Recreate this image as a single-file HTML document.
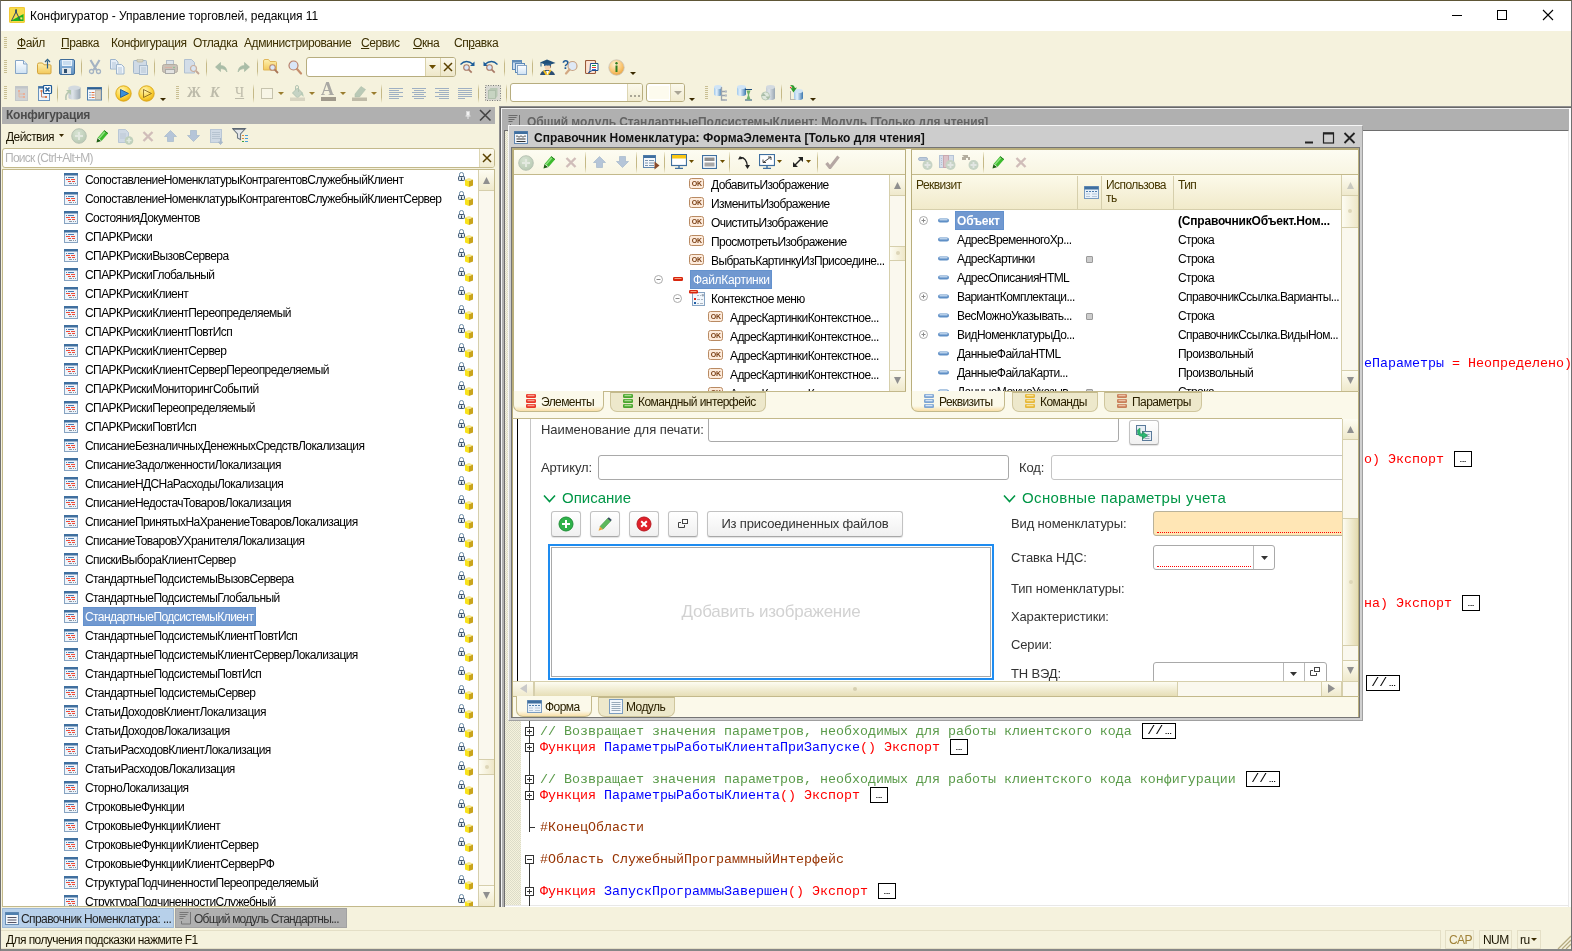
<!DOCTYPE html><html lang="ru"><head><meta charset="utf-8"><title>Конфигуратор</title><style>
*{box-sizing:border-box;margin:0;padding:0}
html,body{width:1572px;height:951px;overflow:hidden;background:#f5f2dd}
body{will-change:transform}
body{position:relative;font-family:"Liberation Sans",sans-serif;font-size:12px;color:#000;letter-spacing:-0.58px}
.a{position:absolute}
.t{position:absolute;white-space:pre;line-height:14px;height:14px}
.ui{font-size:12px;letter-spacing:-0.58px}
.mono{font-family:"Liberation Mono",monospace;font-size:13.33px;letter-spacing:0;line-height:16px;height:16px;position:absolute;white-space:pre}
.kw{color:#f00}.id{color:#00f}.cm{color:#5a9b4a}.pp{color:#963200}
.fold{position:absolute;border:1px solid #000;background:#fff;height:16px;font-family:"Liberation Mono",monospace;font-size:13.33px;letter-spacing:0;line-height:14px;text-align:center;color:#000;white-space:pre;overflow:hidden}
.dots{font-family:"Liberation Sans",sans-serif;font-size:8px;letter-spacing:0;font-weight:bold}
.frm{font-size:13px;letter-spacing:-0.12px;color:#333;position:absolute;white-space:pre;line-height:16px}
</style></head><body><div class="a" style="left:0px;top:0px;width:1572px;height:951px;background:#f5f2dd;border:1px solid #707070;border-top-color:#5e5636;border-bottom:2px solid #868686"></div><div class="a" style="left:1px;top:1px;width:1570px;height:30px;background:#fff"></div><div class="t" style="left:30px;top:9px;font-size:12px;letter-spacing:-0.04px;color:#000">Конфигуратор - Управление торговлей, редакция 11</div><svg class="a" style="left:1440px;top:1px" width="130" height="30" viewBox="0 0 130 30"><g stroke="#000" stroke-width="1" fill="none" shape-rendering="crispEdges"><path d="M12 14.5h10"/><rect x="57.5" y="9.5" width="9" height="9"/></g><path d="M103 9l10 10M113 9l-10 10" stroke="#000" stroke-width="1.1" fill="none"/></svg><svg class="a" style="left:9px;top:7px" width="16" height="16" viewBox="0 0 17 17"><rect x="0" y="0" width="17" height="17" rx="1.5" fill="#f7dc4a"/><rect x="0.5" y="0.5" width="16" height="16" rx="1.5" fill="none" stroke="#f0c838"/><path d="M2 14.5L15.5 7.5V15H2z" fill="#1db11d"/><rect x="12" y="11" width="2.2" height="2.2" fill="#f7e27a"/><path d="M7.5 2v3M7.5 5L2.5 15M7.5 5l4.5 9.5" stroke="#4a5560" stroke-width="1.1" fill="none"/><rect x="6.5" y="3" width="2" height="3.5" fill="#39536b"/></svg><div class="a" style="left:4px;top:37px;width:3px;height:12px;background:repeating-linear-gradient(#c9bf93 0 1px,transparent 1px 2px)"></div><div class="t" style="left:17px;top:36px;color:#3c2f00;letter-spacing:-0.42px"><u>Ф</u>айл</div><div class="t" style="left:61px;top:36px;color:#3c2f00;letter-spacing:-0.42px"><u>П</u>равка</div><div class="t" style="left:111px;top:36px;color:#3c2f00;letter-spacing:-0.42px">Конфигурация</div><div class="t" style="left:193px;top:36px;color:#3c2f00;letter-spacing:-0.42px">Отладка</div><div class="t" style="left:244px;top:36px;color:#3c2f00;letter-spacing:-0.42px">Администрирование</div><div class="t" style="left:361px;top:36px;color:#3c2f00;letter-spacing:-0.42px"><u>С</u>ервис</div><div class="t" style="left:413px;top:36px;color:#3c2f00;letter-spacing:-0.42px"><u>О</u>кна</div><div class="t" style="left:454px;top:36px;color:#3c2f00;letter-spacing:-0.42px">Сп<u>р</u>авка</div><div class="a" style="left:4px;top:60px;width:3px;height:13px;background:repeating-linear-gradient(#c9bf93 0 1px,transparent 1px 2px)"></div><div class="a" style="left:4px;top:86px;width:3px;height:13px;background:repeating-linear-gradient(#c9bf93 0 1px,transparent 1px 2px)"></div><svg width="0" height="0" style="position:absolute"><defs>
<linearGradient id="gpage" x1="0" y1="0" x2="0" y2="1"><stop offset="0" stop-color="#ffffff"/><stop offset="1" stop-color="#cfe2f3"/></linearGradient>
<linearGradient id="gfold" x1="0" y1="0" x2="0" y2="1"><stop offset="0" stop-color="#fdf0b0"/><stop offset="1" stop-color="#f3c95a"/></linearGradient>
<linearGradient id="gsave" x1="0" y1="0" x2="0" y2="1"><stop offset="0" stop-color="#9dc1e4"/><stop offset="1" stop-color="#5f8fbf"/></linearGradient>
<radialGradient id="gplay" cx="0.4" cy="0.3" r="0.8"><stop offset="0" stop-color="#fff6b8"/><stop offset="0.6" stop-color="#fbd136"/><stop offset="1" stop-color="#e0a210"/></radialGradient>
<radialGradient id="ginfo" cx="0.4" cy="0.3" r="0.8"><stop offset="0" stop-color="#fff1d2"/><stop offset="0.6" stop-color="#f9c46f"/><stop offset="1" stop-color="#e59a2d"/></radialGradient>
<linearGradient id="gcyl" x1="0" y1="0" x2="1" y2="0"><stop offset="0" stop-color="#9fc8ec"/><stop offset="0.35" stop-color="#e4f1fb"/><stop offset="1" stop-color="#3c78b0"/></linearGradient>
<linearGradient id="gcylg" x1="0" y1="0" x2="1" y2="0"><stop offset="0" stop-color="#c5cdd4"/><stop offset="0.35" stop-color="#dde3e8"/><stop offset="1" stop-color="#9aa7b2"/></linearGradient>
<radialGradient id="ggrn" cx="0.4" cy="0.3" r="0.8"><stop offset="0" stop-color="#d7e3d2"/><stop offset="1" stop-color="#b5c7b0"/></radialGradient>
<linearGradient id="gbtn" x1="0" y1="0" x2="0" y2="1"><stop offset="0" stop-color="#fdfcf3"/><stop offset="1" stop-color="#efe9cd"/></linearGradient>
<linearGradient id="ghdr" x1="0" y1="0" x2="0" y2="1"><stop offset="0" stop-color="#fcfaea"/><stop offset="1" stop-color="#ede5c2"/></linearGradient>
</defs></svg><svg class="a" style="left:14px;top:59px" width="15" height="16" viewBox="0 0 15 16" ><path d="M1.5 1.5h8l3.5 3.5v9.5h-11.5z" fill="url(#gpage)" stroke="#86a5c6"/><path d="M9.5 1.5v3.5h3.5" fill="#e8f1fa" stroke="#86a5c6"/></svg><svg class="a" style="left:36px;top:58px" width="17" height="17" viewBox="0 0 17 17" ><path d="M1.5 6.5q0-1.500 1.500-1.500h3.500l1.500 1.800h6q1 0 1 1v7q0 1-1 1h-11q-1.500 0-1.500-1.500z" fill="url(#gfold)" stroke="#d3a43c"/><path d="M11.500 10.500v-8" stroke="#2f6286" stroke-width="1.200"/><path d="M9 4l2.500-2.700 2.500 2.700" fill="none" stroke="#2f6286" stroke-width="1.200"/></svg><svg class="a" style="left:59px;top:59px" width="16" height="16" viewBox="0 0 16 16" ><rect x="0.5" y="0.5" width="15" height="15" rx="1.500" fill="url(#gsave)" stroke="#3f6c99"/><rect x="3" y="1" width="10" height="6" fill="#e9f2fb"/><path d="M4 3h8M4 5h8" stroke="#a9c7e4"/><rect x="3" y="9" width="9" height="6" fill="#dfe5ea"/><rect x="5" y="10" width="3" height="4" fill="#2f4f70"/></svg><div class="a" style="left:81px;top:58px;width:1px;height:19px;background:linear-gradient(#f5f2dd,#c5b987 30%,#c5b987 70%,#f5f2dd)"></div><svg class="a" style="left:88px;top:59px" width="14" height="16" viewBox="0 0 14 16" ><path d="M2.5 1l6 10M11.500 1l-6 10" stroke="#a4b3c3" stroke-width="2.200" fill="none"/><circle cx="3.500" cy="12.500" r="2" fill="none" stroke="#a4b3c3" stroke-width="1.300"/><circle cx="10.500" cy="12.500" r="2" fill="none" stroke="#a4b3c3" stroke-width="1.300"/></svg><svg class="a" style="left:109px;top:59px" width="17" height="16" viewBox="0 0 17 16" ><path d="M1.5 0.500h5l2.500 2.500v7h-7.500z" fill="#e6eef7" stroke="#9db4cc"/><path d="M3 4h4M3 6h4M3 8h4" stroke="#b4c6d8"/><path d="M7.500 5.500h5l2.500 2.500v7h-7.500z" fill="#eef4fa" stroke="#9db4cc"/><path d="M9 9h4M9 11h4M9 13h4" stroke="#b4c6d8"/></svg><svg class="a" style="left:133px;top:59px" width="16" height="16" viewBox="0 0 16 16" ><rect x="0.5" y="1.500" width="13" height="13" rx="1" fill="#cfdae6" stroke="#a5b8cb"/><rect x="4" y="0" width="6" height="3" rx="1" fill="#d9d6c3" stroke="#b5b19a" stroke-width="0.700"/><rect x="6.500" y="6.500" width="8" height="9" fill="#dbe5ef" stroke="#a5b8cb"/><path d="M8 9h5M8 11h5M8 13h5" stroke="#b6c5d4"/></svg><div class="a" style="left:154px;top:58px;width:1px;height:19px;background:linear-gradient(#f5f2dd,#c5b987 30%,#c5b987 70%,#f5f2dd)"></div><svg class="a" style="left:162px;top:60px" width="16" height="15" viewBox="0 0 16 15" ><rect x="4.500" y="0.500" width="7" height="5" fill="#dde4ea" stroke="#b5bfc8"/><rect x="0.500" y="4.500" width="15" height="8" rx="2" fill="#c9c1b6" stroke="#b3aca2"/><rect x="3.500" y="9.500" width="9" height="4" fill="#e2e2e0" stroke="#a9a9a6"/><path d="M3 7.500h7" stroke="#d9b0a5"/><circle cx="12" cy="7.500" r="0.800" fill="#7fbf8a"/></svg><svg class="a" style="left:184px;top:59px" width="17" height="16" viewBox="0 0 17 16" ><path d="M0.500 0.500h7l3 3v10.500h-10z" fill="#d3dde8" stroke="#b1c0d0"/><circle cx="9.500" cy="9.500" r="3" fill="#d9e5f2" stroke="#c9ae9c" stroke-width="1.200"/><path d="M12 12l3 3" stroke="#c3a594" stroke-width="1.800"/></svg><div class="a" style="left:206px;top:58px;width:1px;height:19px;background:linear-gradient(#f5f2dd,#c5b987 30%,#c5b987 70%,#f5f2dd)"></div><svg class="a" style="left:215px;top:62px" width="14" height="11" viewBox="0 0 14 11" ><path d="M0.500 5L5.500 0.500v3q6 0 6.500 6.500q-1.500-3.500-6.500-3.500v3z" fill="#a9bda7" stroke="#a1b5a0" stroke-width="0.600"/></svg><svg class="a" style="left:236px;top:62px" width="14" height="11" viewBox="0 0 14 11" ><path d="M13.500 5L8.500 0.500v3q-6 0-6.500 6.500q1.500-3.500 6.500-3.500v3z" fill="#a9bda7" stroke="#a1b5a0" stroke-width="0.600"/></svg><div class="a" style="left:257px;top:58px;width:1px;height:19px;background:linear-gradient(#f5f2dd,#c5b987 30%,#c5b987 70%,#f5f2dd)"></div><svg class="a" style="left:263px;top:58px" width="17" height="17" viewBox="0 0 17 17" ><path d="M0.500 3q0-1.500 1.500-1.500h3.500l1.500 2h5.500q1 0 1 1v7.500h-13z" fill="url(#gfold)" stroke="#e0b65a"/><circle cx="9.500" cy="9.500" r="2.800" fill="#dbe8f8" stroke="#b9876f" stroke-width="1.100"/><path d="M11.700 11.700l3.300 3.300" stroke="#a97557" stroke-width="1.800"/></svg><svg class="a" style="left:287px;top:60px" width="16" height="16" viewBox="0 0 16 16" ><circle cx="6.500" cy="5.500" r="4.500" fill="#d9e6f8" stroke="#b9806a" stroke-width="1.200"/><path d="M10 9l4 4.500" stroke="#c58e6d" stroke-width="2.200" stroke-linecap="round"/></svg><div class="a" style="left:306px;top:57px;width:150px;height:20px;background:#fff;border:1px solid #b7ad7f;border-radius:3px"></div><div class="a" style="left:425px;top:58px;width:30px;height:18px;background:linear-gradient(#fbf9ec,#eee7c9);border-left:1px solid #d9d1a9;border-radius:0 2px 2px 0"></div><div class="a" style="left:440px;top:58px;width:1px;height:18px;background:#d9d1a9"></div><svg class="a" style="left:429px;top:65px" width="7" height="4" viewBox="0 0 7 4" ><path d="M0 0h7L3.5 4z" fill="#6b4e00"/></svg><svg class="a" style="left:443px;top:62px" width="10" height="10" viewBox="0 0 10 10" ><path d="M1 1l8 8M9 1l-8 8" stroke="#5a4100" stroke-width="1.500"/></svg><svg class="a" style="left:459px;top:59px" width="17" height="16" viewBox="0 0 17 16" ><path d="M1.500 5.500q5.500-6 13 0" fill="none" stroke="#1c5d99" stroke-width="1.300"/><path d="M15.500 2.500v4.500h-4.500z" fill="#1c5d99"/><circle cx="7.500" cy="8.500" r="2.800" fill="#d9e6f8" stroke="#a97a66" stroke-width="1.100"/><path d="M9.700 10.700l3 3" stroke="#a97a66" stroke-width="1.700"/></svg><svg class="a" style="left:482px;top:59px" width="17" height="16" viewBox="0 0 17 16" ><path d="M15.500 5.500q-5.500-6-13 0" fill="none" stroke="#1c5d99" stroke-width="1.300"/><path d="M1.500 2.500v4.500h4.500z" fill="#1c5d99"/><circle cx="7.500" cy="8.500" r="2.800" fill="#d9e6f8" stroke="#a97a66" stroke-width="1.100"/><path d="M9.700 10.700l3 3" stroke="#a97a66" stroke-width="1.700"/></svg><div class="a" style="left:504px;top:58px;width:1px;height:19px;background:linear-gradient(#f5f2dd,#c5b987 30%,#c5b987 70%,#f5f2dd)"></div><svg class="a" style="left:512px;top:60px" width="15" height="15" viewBox="0 0 15 15" ><rect x="0.500" y="0.500" width="9" height="9" fill="#c9dcef" stroke="#5f8bb8"/><rect x="0.500" y="0.500" width="9" height="2" fill="#5f8bb8"/><rect x="3.500" y="3.500" width="9" height="9" fill="#e4eef8" stroke="#5f8bb8"/><rect x="5.500" y="5.500" width="9" height="9" fill="url(#gpage)" stroke="#86a5c6"/></svg><div class="a" style="left:532px;top:58px;width:1px;height:19px;background:linear-gradient(#f5f2dd,#c5b987 30%,#c5b987 70%,#f5f2dd)"></div><svg class="a" style="left:539px;top:59px" width="17" height="17" viewBox="0 0 17 17" ><path d="M1 16q1-4 5-5h4q5 1 6 5z" fill="#2d4f73"/><path d="M5.500 11l2.500 3 3-3.500 1.500 1-3 4.500h-3l-2.500-4z" fill="#f4c224"/><path d="M7 12h3l-1.500 4z" fill="#fff"/><ellipse cx="8.500" cy="7.500" rx="3" ry="3.700" fill="#f3d2b3"/><path d="M9.500 4.500q3 0 2.500 5q-1-1-1-3z" fill="#8a5a36"/><path d="M1 3.500L8 0.500l8.500 3.500L8.500 6.500z" fill="#1f4e79"/><path d="M5 4.500h7v2.500q-3.500-1.500-7 0z" fill="#2a5d8c"/><path d="M2 3.500v4" stroke="#2a5d8c"/></svg><svg class="a" style="left:562px;top:59px" width="17" height="17" viewBox="0 0 17 17" ><text x="0" y="9.500" font-family="Liberation Sans" font-weight="bold" font-size="12" fill="#1f5a96">?</text><circle cx="10.500" cy="7" r="4.500" fill="#dfe9f6" stroke="#c7a283" stroke-width="1.200"/><path d="M7.500 10.500l-3.500 4" stroke="#d3a882" stroke-width="2.200" stroke-linecap="round"/></svg><svg class="a" style="left:585px;top:60px" width="14" height="15" viewBox="0 0 14 15" ><rect x="0.500" y="0.500" width="10" height="13" rx="1" fill="#fde3d3" stroke="#9a5a3a" stroke-width="1.100"/><path d="M5.500 3.500h7.500v7h-6l-3.500 2.500 1.500-2.500z" fill="#fff" stroke="#1f4e8c"/><path d="M7 5.500h4" stroke="#1f9a3a"/><path d="M7 7.500h4" stroke="#e03a2a"/><path d="M7 9.500h4" stroke="#3a6ad0"/></svg><svg class="a" style="left:608px;top:59px" width="17" height="17" viewBox="0 0 17 17" ><circle cx="8.500" cy="8.500" r="7.700" fill="url(#ginfo)" stroke="#c9c3b8" stroke-width="0.800"/><rect x="7.500" y="6.500" width="2" height="6.500" fill="#2e7d1e"/><circle cx="8.500" cy="4.300" r="1.200" fill="#2e7d1e"/></svg><svg class="a" style="left:630px;top:72px" width="6" height="3" viewBox="0 0 6 3" ><path d="M0 0h6L3.0 3z" fill="#3a2a00"/></svg><svg class="a" style="left:15px;top:86px" width="13" height="15" viewBox="0 0 13 15" ><rect x="0.500" y="0.500" width="12" height="14" fill="#d0d3d4" stroke="#c3c7c9"/><rect x="0.500" y="0.500" width="12" height="2" fill="#c1c5c8"/><path d="M4 5v6h5M4 8h5" stroke="#e2b9a4" fill="none"/><rect x="8" y="7" width="2" height="2" fill="#e8b09a"/><rect x="8" y="10" width="2" height="2" fill="#e8b09a"/><rect x="3" y="4" width="2" height="2" fill="#e8b09a"/></svg><svg class="a" style="left:38px;top:85px" width="15" height="16" viewBox="0 0 15 16" ><rect x="0.500" y="1.500" width="11" height="14" fill="#eef4fb" stroke="#6a93bd"/><rect x="0.500" y="1.500" width="11" height="2" fill="#3f6f9f"/><path d="M3.500 6v6h5" stroke="#c9826a" fill="none"/><rect x="7" y="11" width="2" height="2" fill="#e07a50"/><rect x="2.500" y="5" width="2" height="2" fill="#e07a50"/><rect x="5.500" y="0.500" width="8" height="8" rx="1" fill="#fff" stroke="#1f5a96" stroke-width="1.200"/><path d="M7.500 2.500l4 4M11.500 2.500l-4 4" stroke="#1f5a96" stroke-width="1.600"/></svg><div class="a" style="left:57px;top:84px;width:1px;height:19px;background:linear-gradient(#f5f2dd,#c5b987 30%,#c5b987 70%,#f5f2dd)"></div><svg class="a" style="left:64px;top:85px" width="17" height="16" viewBox="0 0 17 16" ><path d="M4.500 2.500v10q0 2 6 2t6-2v-10" fill="url(#gcylg)"/><ellipse cx="10.500" cy="2.700" rx="6" ry="2.200" fill="#d3dae0"/><path d="M2 15q-1-6 3-8" fill="none" stroke="#b5c4b0" stroke-width="1.500"/><path d="M2 5h5v5z" fill="#b5c9ae"/></svg><svg class="a" style="left:87px;top:87px" width="16" height="14" viewBox="0 0 16 14" ><rect x="0.500" y="0.500" width="14" height="12.500" fill="#f4f8fc" stroke="#4f7fae"/><rect x="0.500" y="0.500" width="14" height="2" fill="#2f5f8f"/><rect x="8.500" y="3" width="5.500" height="9.500" fill="#d3cec2" stroke="#a9a49a" stroke-width="0.600"/><path d="M4.500 5.500h3M4.500 8h3M4.500 10.500h3" stroke="#e0703a" stroke-width="1.200"/><path d="M2.500 5.500h1M2.500 8h1M2.500 10.500h1" stroke="#2f5f8f" stroke-width="1.200"/></svg><div class="a" style="left:108px;top:84px;width:1px;height:19px;background:linear-gradient(#f5f2dd,#c5b987 30%,#c5b987 70%,#f5f2dd)"></div><svg class="a" style="left:115px;top:85px" width="17" height="17" viewBox="0 0 17 17" ><circle cx="8.500" cy="8.500" r="7.700" fill="url(#gplay)" stroke="#d9a514" stroke-width="0.900"/><path d="M5.500 4.500v8l8-4z" fill="#3a8fd9" stroke="#1f5a96" stroke-width="0.900"/></svg><svg class="a" style="left:138px;top:85px" width="17" height="17" viewBox="0 0 17 17" ><circle cx="8.500" cy="8.500" r="7.700" fill="url(#gplay)" stroke="#d9a514" stroke-width="0.900"/><path d="M5.500 4.500v8l8-4z" fill="none" stroke="#8a6a20" stroke-width="0.900"/></svg><svg class="a" style="left:160px;top:98px" width="6" height="3" viewBox="0 0 6 3" ><path d="M0 0h6L3.0 3z" fill="#3a2a00"/></svg><div class="a" style="left:176px;top:86px;width:3px;height:13px;background:repeating-linear-gradient(#c9bf93 0 1px,transparent 1px 2px)"></div><div class="t" style="left:187px;top:85px;font-family:&quot;Liberation Serif&quot;,serif;font-weight:bold;font-size:14px;letter-spacing:0;color:#bdbbaa;line-height:16px;height:16px">Ж</div><div class="t" style="left:210px;top:85px;font-family:&quot;Liberation Serif&quot;,serif;font-weight:bold;font-style:italic;font-size:14px;letter-spacing:0;color:#bdbbaa;line-height:16px;height:16px">К</div><div class="t" style="left:235px;top:85px;font-family:&quot;Liberation Serif&quot;,serif;font-size:14px;letter-spacing:0;color:#bdbbaa;line-height:16px;height:16px;text-decoration:underline">Ч</div><div class="a" style="left:253px;top:84px;width:1px;height:19px;background:linear-gradient(#f5f2dd,#c5b987 30%,#c5b987 70%,#f5f2dd)"></div><div class="a" style="left:261px;top:88px;width:12px;height:11px;border:1px solid #c6c3ad;background:#f7f5e6"></div><svg class="a" style="left:278px;top:92px" width="6" height="3" viewBox="0 0 6 3" ><path d="M0 0h6L3.0 3z" fill="#9a7d2e"/></svg><svg class="a" style="left:290px;top:85px" width="16" height="16" viewBox="0 0 16 16" ><path d="M2.500 8l5-5 5 5-5 5z" fill="#c5d3c4" stroke="#b3c4b2"/><path d="M5.500 5v-3q0-1.500 1.500-1.500t1.500 1.500v5" fill="none" stroke="#b3c4b2"/><path d="M11 7q3 1 2.500 5q-1.500-2-2.500-2z" fill="#b8cbb7"/><rect x="0" y="12.500" width="15" height="3.500" fill="#d7d4c1"/></svg><svg class="a" style="left:309px;top:92px" width="6" height="3" viewBox="0 0 6 3" ><path d="M0 0h6L3.0 3z" fill="#9a7d2e"/></svg><div class="t" style="left:321px;top:80px;font-family:&quot;Liberation Serif&quot;,serif;font-weight:bold;font-size:18px;letter-spacing:0;color:#a9a8a3;line-height:18px;height:18px">A</div><div class="a" style="left:321px;top:97px;width:15px;height:4px;background:#a09a8c"></div><svg class="a" style="left:340px;top:92px" width="6" height="3" viewBox="0 0 6 3" ><path d="M0 0h6L3.0 3z" fill="#9a7d2e"/></svg><svg class="a" style="left:352px;top:85px" width="16" height="16" viewBox="0 0 16 16" ><path d="M3 9l6-7.500 4.500 3-6 7.500h-4.500z" fill="#b9c9b6" stroke="#aebfab" stroke-width="0.600"/><rect x="0" y="12.500" width="15" height="3.500" fill="#bfbba8"/></svg><svg class="a" style="left:371px;top:92px" width="6" height="3" viewBox="0 0 6 3" ><path d="M0 0h6L3.0 3z" fill="#9a7d2e"/></svg><div class="a" style="left:381px;top:84px;width:1px;height:19px;background:linear-gradient(#f5f2dd,#c5b987 30%,#c5b987 70%,#f5f2dd)"></div><div class="a" style="left:389px;top:88px;width:14px;height:1px;background:#9fb0c3"></div><div class="a" style="left:389px;top:90px;width:10px;height:1px;background:#9fb0c3"></div><div class="a" style="left:389px;top:92px;width:14px;height:1px;background:#9fb0c3"></div><div class="a" style="left:389px;top:94px;width:10px;height:1px;background:#9fb0c3"></div><div class="a" style="left:389px;top:96px;width:14px;height:1px;background:#9fb0c3"></div><div class="a" style="left:389px;top:98px;width:10px;height:1px;background:#9fb0c3"></div><div class="a" style="left:412px;top:88px;width:14px;height:1px;background:#9fb0c3"></div><div class="a" style="left:414px;top:90px;width:10px;height:1px;background:#9fb0c3"></div><div class="a" style="left:412px;top:92px;width:14px;height:1px;background:#9fb0c3"></div><div class="a" style="left:414px;top:94px;width:10px;height:1px;background:#9fb0c3"></div><div class="a" style="left:412px;top:96px;width:14px;height:1px;background:#9fb0c3"></div><div class="a" style="left:414px;top:98px;width:10px;height:1px;background:#9fb0c3"></div><div class="a" style="left:435px;top:88px;width:14px;height:1px;background:#9fb0c3"></div><div class="a" style="left:439px;top:90px;width:10px;height:1px;background:#9fb0c3"></div><div class="a" style="left:435px;top:92px;width:14px;height:1px;background:#9fb0c3"></div><div class="a" style="left:439px;top:94px;width:10px;height:1px;background:#9fb0c3"></div><div class="a" style="left:435px;top:96px;width:14px;height:1px;background:#9fb0c3"></div><div class="a" style="left:439px;top:98px;width:10px;height:1px;background:#9fb0c3"></div><div class="a" style="left:458px;top:88px;width:14px;height:1px;background:#9fb0c3"></div><div class="a" style="left:458px;top:90px;width:14px;height:1px;background:#9fb0c3"></div><div class="a" style="left:458px;top:92px;width:14px;height:1px;background:#9fb0c3"></div><div class="a" style="left:458px;top:94px;width:14px;height:1px;background:#9fb0c3"></div><div class="a" style="left:458px;top:96px;width:14px;height:1px;background:#9fb0c3"></div><div class="a" style="left:458px;top:98px;width:7px;height:1px;background:#9fb0c3"></div><div class="a" style="left:478px;top:84px;width:1px;height:19px;background:linear-gradient(#f5f2dd,#c5b987 30%,#c5b987 70%,#f5f2dd)"></div><svg class="a" style="left:485px;top:85px" width="17" height="16" viewBox="0 0 17 16" ><rect x="0.500" y="0.500" width="15" height="15" fill="#d9d9d2" stroke="#7a7a7a" stroke-dasharray="1 1.500" stroke-width="1"/><path d="M3.500 5.500l2-2.500h7v8l-2 2.500h-7z" fill="#b9c8b4"/><rect x="3.500" y="5.500" width="7" height="8" fill="#c7d4c2" stroke="#a8b9a4" stroke-width="0.700"/></svg><div class="a" style="left:506px;top:84px;width:1px;height:19px;background:linear-gradient(#f5f2dd,#c5b987 30%,#c5b987 70%,#f5f2dd)"></div><div class="a" style="left:510px;top:83px;width:133px;height:19px;background:#fff;border:1px solid #b7ad7f;border-radius:3px"></div><div class="a" style="left:627px;top:84px;width:15px;height:17px;background:linear-gradient(#fbf9ec,#f1ebd0);border-left:1px solid #ddd6b3;border-radius:0 2px 2px 0"></div><div class="a" style="left:630px;top:95px;width:2px;height:2px;background:#a9a595"></div><div class="a" style="left:634px;top:95px;width:2px;height:2px;background:#a9a595"></div><div class="a" style="left:638px;top:95px;width:2px;height:2px;background:#a9a595"></div><div class="a" style="left:646px;top:83px;width:39px;height:19px;background:#fff;border:1px solid #b7ad7f;border-radius:3px"></div><div class="a" style="left:649px;top:86px;width:20px;height:13px;background:#fdfbee"></div><div class="a" style="left:670px;top:84px;width:14px;height:17px;background:linear-gradient(#fbf9ec,#f1ebd0);border-left:1px solid #ddd6b3;border-radius:0 2px 2px 0"></div><svg class="a" style="left:674px;top:91px" width="8" height="4" viewBox="0 0 8 4" ><path d="M0 0h8L4.0 4z" fill="#aaa595"/></svg><svg class="a" style="left:689px;top:98px" width="6" height="3" viewBox="0 0 6 3" ><path d="M0 0h6L3.0 3z" fill="#3a2a00"/></svg><div class="a" style="left:705px;top:86px;width:3px;height:13px;background:repeating-linear-gradient(#c9bf93 0 1px,transparent 1px 2px)"></div><svg class="a" style="left:714px;top:85px" width="14" height="16" viewBox="0 0 14 16" ><path d="M0 2v7q0 2 4.0 2t4.0-2v-7" fill="url(#gcyl)"/><ellipse cx="4.0" cy="2" rx="4.0" ry="2" fill="#cfe4f6"/><path d="M7.500 2v13h5M7.500 6.500h5M7.500 10.500h5" fill="none" stroke="#9aa3ad" stroke-width="1.300"/><rect x="11" y="5.500" width="2" height="2" fill="#b5bcc4"/><rect x="11" y="9.500" width="2" height="2" fill="#b5bcc4"/><rect x="11" y="14" width="2" height="2" fill="#b5bcc4"/></svg><svg class="a" style="left:737px;top:85px" width="16" height="16" viewBox="0 0 16 16" ><path d="M0 2v7q0 2 4.5 2t4.5-2v-7" fill="url(#gcyl)"/><ellipse cx="4.5" cy="2" rx="4.5" ry="2" fill="#cfe4f6"/><path d="M8 4.500h7M8 15h7" stroke="#1f4e79" stroke-width="1.200"/><path d="M9.500 5.500h4l-1.500 4.500 1.500 4.500h-4l1.500-4.500z" fill="#6fb26a"/></svg><svg class="a" style="left:760px;top:85px" width="16" height="16" viewBox="0 0 16 16" ><path d="M6 2v11q0 2 4.5 2t4.5-2v-11" fill="url(#gcylg)"/><ellipse cx="10.5" cy="2" rx="4.5" ry="2" fill="#d3dae0"/><circle cx="5.500" cy="11" r="4" fill="#dfe8dd" stroke="#b9c9b6"/><path d="M1 11l2.500-3 2.500 3zM5.500 11.500l2.500 3 2.500-3z" fill="#a9bda7"/></svg><div class="a" style="left:781px;top:84px;width:1px;height:19px;background:linear-gradient(#f5f2dd,#c5b987 30%,#c5b987 70%,#f5f2dd)"></div><svg class="a" style="left:789px;top:84px" width="15" height="17" viewBox="0 0 15 17" ><path d="M1.500 7.500v8h5" fill="none" stroke="#7a7a7a" stroke-dasharray="1 1"/><path d="M5 7v7q0 2 4.5 2t4.5-2v-7" fill="url(#gcyl)"/><ellipse cx="9.5" cy="7" rx="4.5" ry="2" fill="#cfe4f6"/><path d="M1 1.500q4-1.500 5 2.500l2-0.500-3.500 5-3-4.500 2 0.300q-0.500-2-2.500-2.800z" fill="#2d9a2d"/><circle cx="1.700" cy="3.500" r="0.800" fill="#f33"/></svg><svg class="a" style="left:810px;top:98px" width="6" height="3" viewBox="0 0 6 3" ><path d="M0 0h6L3.0 3z" fill="#3a2a00"/></svg><div class="a" style="left:2px;top:107px;width:493px;height:17px;background:#b0b0b0"></div><div class="t" style="left:6px;top:108px;font-weight:bold;color:#4b4b4b;letter-spacing:-0.25px">Конфигурация</div><svg class="a" style="left:464px;top:110px" width="8" height="10" viewBox="0 0 8 10" ><rect x="2.500" y="1.500" width="3" height="4" fill="#f3f3f3" stroke="#d9d9d9" stroke-width="0.700"/><path d="M1.500 6h5M4 6v3" stroke="#e9e9e9"/></svg><svg class="a" style="left:479px;top:109px" width="13" height="13" viewBox="0 0 13 13" ><path d="M1 1l10.500 10.500M11.500 1l-10.500 10.500" stroke="#444" stroke-width="1.600"/></svg><div class="t" style="left:6px;top:130px;color:#1a1400">Действия</div><svg class="a" style="left:59px;top:134px" width="5" height="3" viewBox="0 0 5 3" ><path d="M0 0h5L2.5 3z" fill="#3a2a00"/></svg><svg class="a" style="left:71px;top:128px" width="16" height="16" viewBox="0 0 16 16" ><circle cx="8" cy="8" r="7.300" fill="url(#ggrn)" stroke="#b4bfb1" stroke-width="0.900"/><path d="M8 4v8M4 8h8" stroke="#e3e9e0" stroke-width="2"/></svg><svg class="a" style="left:95px;top:129px" width="14" height="14" viewBox="0 0 14 14" ><path d="M2.500 9l6.500-7.500 4 3-6.500 7.500z" fill="#3dbb2d"/><path d="M4 9.500l6.500-7.500" stroke="#8fe07f" stroke-width="1.400"/><path d="M9 1.500l4 3" stroke="#1a7a12" stroke-width="1"/><path d="M2.500 9l4 3-5 1.500z" fill="#1d5e14"/><path d="M2.500 9l4 3" stroke="#eaf6e4" stroke-width="0.800"/></svg><svg class="a" style="left:118px;top:129px" width="16" height="16" viewBox="0 0 16 16" ><path d="M0.500 0.500h7l3 3v10h-10z" fill="#cfd9e4" stroke="#b9c7d5"/><path d="M2 5h6M2 7h6M2 9h6" stroke="#bcc8d5"/><circle cx="11" cy="11.500" r="4.300" fill="#bfd0bb"/><path d="M11 9v5M8.500 11.500h5" stroke="#e3ecdf" stroke-width="1.500"/></svg><svg class="a" style="left:142px;top:131px" width="12" height="11" viewBox="0 0 12 11" ><path d="M1.500 1l9 9M10.500 1l-9 9" stroke="#d0bdb9" stroke-width="2.400"/></svg><svg class="a" style="left:164px;top:130px" width="13" height="12" viewBox="0 0 13 12" ><path d="M6.500 0.500l6 6h-3v5h-6v-5h-3z" fill="#b5c5d8" stroke="#a5b7cb" stroke-width="0.700"/></svg><svg class="a" style="left:187px;top:130px" width="13" height="12" viewBox="0 0 13 12" ><path d="M6.500 11.500l6-6h-3v-5h-6v5h-3z" fill="#b5c5d8" stroke="#a5b7cb" stroke-width="0.700"/></svg><svg class="a" style="left:210px;top:129px" width="14" height="16" viewBox="0 0 14 16" ><rect x="0.500" y="0.500" width="11" height="13" fill="#cfd9e4" stroke="#b9c7d5"/><path d="M2 3.500h8M2 5.500h8M2 7.500h8M2 9.500h8" stroke="#b7c4d1"/><path d="M10.500 9v6M8.500 13l2 2.500 2-2.500z" stroke="#a9b9c9" fill="#a9b9c9"/></svg><svg class="a" style="left:232px;top:128px" width="17" height="18" viewBox="0 0 17 18" ><path d="M0.500 0.500h13l-5 5.500v5.500l-3-1.500v-4z" fill="#e4e7ea" stroke="#6f7a85" stroke-width="1.100"/><path d="M1 1h12" stroke="#555f69" stroke-width="1.400"/><path d="M10 7.500h2M10 10.500h2M10 13.500h2" stroke="#e08a3a" stroke-width="1.200"/><path d="M13 7.500h3M13 10.500h3M13 13.500h3" stroke="#4a9fd8" stroke-width="1.200"/><path d="M10 13.500h2" stroke="#3aa03a" stroke-width="1.200"/></svg><div class="a" style="left:2px;top:148px;width:493px;height:20px;background:#fff;border:1px solid #c3b98b;border-radius:3px"></div><div class="a" style="left:479px;top:149px;width:15px;height:18px;background:linear-gradient(#fcfaee,#f1ebd0);border-left:1px solid #ddd6b3;border-radius:0 2px 2px 0"></div><div class="t" style="left:5px;top:151px;color:#b4b4b4;letter-spacing:-0.75px">Поиск (Ctrl+Alt+M)</div><svg class="a" style="left:482px;top:153px" width="10" height="10" viewBox="0 0 10 10" ><path d="M1 1l8 8M9 1l-8 8" stroke="#5a4100" stroke-width="1.500"/></svg><div class="a" style="left:2px;top:169px;width:493px;height:738px;background:#fff;border:1px solid #c3b98b"></div><div class="a" style="left:3px;top:170px;width:476px;height:736px;overflow:hidden"><svg class="a" style="left:61px;top:3px" width="14" height="13" viewBox="0 0 14 13"><rect x="0.500" y="0.500" width="13" height="12" fill="#eef4fa" stroke="#86a3c2"/><rect x="0" y="0" width="14" height="2.500" fill="#3f6f9f"/><path d="M2 4.500h1M4 4.500h6" stroke="#4a7ab0"/><path d="M2 6.500h4M7 6.500h4" stroke="#ee4a38"/><path d="M4 8.500h3M8 8.500h3" stroke="#ee4a38"/><path d="M5 10.500h3M9 10.500h1M11 10.500h1" stroke="#8a97a5"/></svg><div class="t" style="left:82px;top:3px">СопоставлениеНоменклатурыКонтрагентовСлужебныйКлиент</div><svg class="a" style="left:455px;top:2px" width="16" height="16" viewBox="0 0 16 16"><path d="M1.500 4.500v-2.200q0-1.800 2-1.800t2 1.800v2.200" fill="#fff" stroke="#6a8aa5" stroke-width="1"/><rect x="0.500" y="4.500" width="6" height="4" rx="0.800" fill="#dde7f0" stroke="#3f5670" stroke-width="1"/><path d="M3.500 5.500v2.500" stroke="#33465c" stroke-width="1"/><path d="M7 7.500l4 1.500v6l-4-1.500z" fill="#f8e21c"/><path d="M11 9l4-1.500v6l-4 1.500z" fill="#c9a41c"/><path d="M7 7.500l4-1.500 4 1.500-4 1.500z" fill="#f6e88c"/></svg><svg class="a" style="left:61px;top:22px" width="14" height="13" viewBox="0 0 14 13"><rect x="0.500" y="0.500" width="13" height="12" fill="#eef4fa" stroke="#86a3c2"/><rect x="0" y="0" width="14" height="2.500" fill="#3f6f9f"/><path d="M2 4.500h1M4 4.500h6" stroke="#4a7ab0"/><path d="M2 6.500h4M7 6.500h4" stroke="#ee4a38"/><path d="M4 8.500h3M8 8.500h3" stroke="#ee4a38"/><path d="M5 10.500h3M9 10.500h1M11 10.500h1" stroke="#8a97a5"/></svg><div class="t" style="left:82px;top:22px">СопоставлениеНоменклатурыКонтрагентовСлужебныйКлиентСервер</div><svg class="a" style="left:455px;top:21px" width="16" height="16" viewBox="0 0 16 16"><path d="M1.500 4.500v-2.200q0-1.800 2-1.800t2 1.800v2.200" fill="#fff" stroke="#6a8aa5" stroke-width="1"/><rect x="0.500" y="4.500" width="6" height="4" rx="0.800" fill="#dde7f0" stroke="#3f5670" stroke-width="1"/><path d="M3.500 5.500v2.500" stroke="#33465c" stroke-width="1"/><path d="M7 7.500l4 1.500v6l-4-1.500z" fill="#f8e21c"/><path d="M11 9l4-1.500v6l-4 1.500z" fill="#c9a41c"/><path d="M7 7.500l4-1.500 4 1.500-4 1.500z" fill="#f6e88c"/></svg><svg class="a" style="left:61px;top:41px" width="14" height="13" viewBox="0 0 14 13"><rect x="0.500" y="0.500" width="13" height="12" fill="#eef4fa" stroke="#86a3c2"/><rect x="0" y="0" width="14" height="2.500" fill="#3f6f9f"/><path d="M2 4.500h1M4 4.500h6" stroke="#4a7ab0"/><path d="M2 6.500h4M7 6.500h4" stroke="#ee4a38"/><path d="M4 8.500h3M8 8.500h3" stroke="#ee4a38"/><path d="M5 10.500h3M9 10.500h1M11 10.500h1" stroke="#8a97a5"/></svg><div class="t" style="left:82px;top:41px">СостоянияДокументов</div><svg class="a" style="left:455px;top:40px" width="16" height="16" viewBox="0 0 16 16"><path d="M1.500 4.500v-2.200q0-1.800 2-1.800t2 1.800v2.200" fill="#fff" stroke="#6a8aa5" stroke-width="1"/><rect x="0.500" y="4.500" width="6" height="4" rx="0.800" fill="#dde7f0" stroke="#3f5670" stroke-width="1"/><path d="M3.500 5.500v2.500" stroke="#33465c" stroke-width="1"/><path d="M7 7.500l4 1.500v6l-4-1.500z" fill="#f8e21c"/><path d="M11 9l4-1.500v6l-4 1.500z" fill="#c9a41c"/><path d="M7 7.500l4-1.500 4 1.500-4 1.500z" fill="#f6e88c"/></svg><svg class="a" style="left:61px;top:60px" width="14" height="13" viewBox="0 0 14 13"><rect x="0.500" y="0.500" width="13" height="12" fill="#eef4fa" stroke="#86a3c2"/><rect x="0" y="0" width="14" height="2.500" fill="#3f6f9f"/><path d="M2 4.500h1M4 4.500h6" stroke="#4a7ab0"/><path d="M2 6.500h4M7 6.500h4" stroke="#ee4a38"/><path d="M4 8.500h3M8 8.500h3" stroke="#ee4a38"/><path d="M5 10.500h3M9 10.500h1M11 10.500h1" stroke="#8a97a5"/></svg><div class="t" style="left:82px;top:60px">СПАРКРиски</div><svg class="a" style="left:455px;top:59px" width="16" height="16" viewBox="0 0 16 16"><path d="M1.500 4.500v-2.200q0-1.800 2-1.800t2 1.800v2.200" fill="#fff" stroke="#6a8aa5" stroke-width="1"/><rect x="0.500" y="4.500" width="6" height="4" rx="0.800" fill="#dde7f0" stroke="#3f5670" stroke-width="1"/><path d="M3.500 5.500v2.500" stroke="#33465c" stroke-width="1"/><path d="M7 7.500l4 1.500v6l-4-1.500z" fill="#f8e21c"/><path d="M11 9l4-1.500v6l-4 1.500z" fill="#c9a41c"/><path d="M7 7.500l4-1.500 4 1.500-4 1.500z" fill="#f6e88c"/></svg><svg class="a" style="left:61px;top:79px" width="14" height="13" viewBox="0 0 14 13"><rect x="0.500" y="0.500" width="13" height="12" fill="#eef4fa" stroke="#86a3c2"/><rect x="0" y="0" width="14" height="2.500" fill="#3f6f9f"/><path d="M2 4.500h1M4 4.500h6" stroke="#4a7ab0"/><path d="M2 6.500h4M7 6.500h4" stroke="#ee4a38"/><path d="M4 8.500h3M8 8.500h3" stroke="#ee4a38"/><path d="M5 10.500h3M9 10.500h1M11 10.500h1" stroke="#8a97a5"/></svg><div class="t" style="left:82px;top:79px">СПАРКРискиВызовСервера</div><svg class="a" style="left:455px;top:78px" width="16" height="16" viewBox="0 0 16 16"><path d="M1.500 4.500v-2.200q0-1.800 2-1.800t2 1.800v2.200" fill="#fff" stroke="#6a8aa5" stroke-width="1"/><rect x="0.500" y="4.500" width="6" height="4" rx="0.800" fill="#dde7f0" stroke="#3f5670" stroke-width="1"/><path d="M3.500 5.500v2.500" stroke="#33465c" stroke-width="1"/><path d="M7 7.500l4 1.500v6l-4-1.500z" fill="#f8e21c"/><path d="M11 9l4-1.500v6l-4 1.500z" fill="#c9a41c"/><path d="M7 7.500l4-1.500 4 1.500-4 1.500z" fill="#f6e88c"/></svg><svg class="a" style="left:61px;top:98px" width="14" height="13" viewBox="0 0 14 13"><rect x="0.500" y="0.500" width="13" height="12" fill="#eef4fa" stroke="#86a3c2"/><rect x="0" y="0" width="14" height="2.500" fill="#3f6f9f"/><path d="M2 4.500h1M4 4.500h6" stroke="#4a7ab0"/><path d="M2 6.500h4M7 6.500h4" stroke="#ee4a38"/><path d="M4 8.500h3M8 8.500h3" stroke="#ee4a38"/><path d="M5 10.500h3M9 10.500h1M11 10.500h1" stroke="#8a97a5"/></svg><div class="t" style="left:82px;top:98px">СПАРКРискиГлобальный</div><svg class="a" style="left:455px;top:97px" width="16" height="16" viewBox="0 0 16 16"><path d="M1.500 4.500v-2.200q0-1.800 2-1.800t2 1.800v2.200" fill="#fff" stroke="#6a8aa5" stroke-width="1"/><rect x="0.500" y="4.500" width="6" height="4" rx="0.800" fill="#dde7f0" stroke="#3f5670" stroke-width="1"/><path d="M3.500 5.500v2.500" stroke="#33465c" stroke-width="1"/><path d="M7 7.500l4 1.500v6l-4-1.500z" fill="#f8e21c"/><path d="M11 9l4-1.500v6l-4 1.500z" fill="#c9a41c"/><path d="M7 7.500l4-1.500 4 1.500-4 1.500z" fill="#f6e88c"/></svg><svg class="a" style="left:61px;top:117px" width="14" height="13" viewBox="0 0 14 13"><rect x="0.500" y="0.500" width="13" height="12" fill="#eef4fa" stroke="#86a3c2"/><rect x="0" y="0" width="14" height="2.500" fill="#3f6f9f"/><path d="M2 4.500h1M4 4.500h6" stroke="#4a7ab0"/><path d="M2 6.500h4M7 6.500h4" stroke="#ee4a38"/><path d="M4 8.500h3M8 8.500h3" stroke="#ee4a38"/><path d="M5 10.500h3M9 10.500h1M11 10.500h1" stroke="#8a97a5"/></svg><div class="t" style="left:82px;top:117px">СПАРКРискиКлиент</div><svg class="a" style="left:455px;top:116px" width="16" height="16" viewBox="0 0 16 16"><path d="M1.500 4.500v-2.200q0-1.800 2-1.800t2 1.800v2.200" fill="#fff" stroke="#6a8aa5" stroke-width="1"/><rect x="0.500" y="4.500" width="6" height="4" rx="0.800" fill="#dde7f0" stroke="#3f5670" stroke-width="1"/><path d="M3.500 5.500v2.500" stroke="#33465c" stroke-width="1"/><path d="M7 7.500l4 1.500v6l-4-1.500z" fill="#f8e21c"/><path d="M11 9l4-1.500v6l-4 1.500z" fill="#c9a41c"/><path d="M7 7.500l4-1.500 4 1.500-4 1.500z" fill="#f6e88c"/></svg><svg class="a" style="left:61px;top:136px" width="14" height="13" viewBox="0 0 14 13"><rect x="0.500" y="0.500" width="13" height="12" fill="#eef4fa" stroke="#86a3c2"/><rect x="0" y="0" width="14" height="2.500" fill="#3f6f9f"/><path d="M2 4.500h1M4 4.500h6" stroke="#4a7ab0"/><path d="M2 6.500h4M7 6.500h4" stroke="#ee4a38"/><path d="M4 8.500h3M8 8.500h3" stroke="#ee4a38"/><path d="M5 10.500h3M9 10.500h1M11 10.500h1" stroke="#8a97a5"/></svg><div class="t" style="left:82px;top:136px">СПАРКРискиКлиентПереопределяемый</div><svg class="a" style="left:455px;top:135px" width="16" height="16" viewBox="0 0 16 16"><path d="M1.500 4.500v-2.200q0-1.800 2-1.800t2 1.800v2.200" fill="#fff" stroke="#6a8aa5" stroke-width="1"/><rect x="0.500" y="4.500" width="6" height="4" rx="0.800" fill="#dde7f0" stroke="#3f5670" stroke-width="1"/><path d="M3.500 5.500v2.500" stroke="#33465c" stroke-width="1"/><path d="M7 7.500l4 1.500v6l-4-1.500z" fill="#f8e21c"/><path d="M11 9l4-1.500v6l-4 1.500z" fill="#c9a41c"/><path d="M7 7.500l4-1.500 4 1.500-4 1.500z" fill="#f6e88c"/></svg><svg class="a" style="left:61px;top:155px" width="14" height="13" viewBox="0 0 14 13"><rect x="0.500" y="0.500" width="13" height="12" fill="#eef4fa" stroke="#86a3c2"/><rect x="0" y="0" width="14" height="2.500" fill="#3f6f9f"/><path d="M2 4.500h1M4 4.500h6" stroke="#4a7ab0"/><path d="M2 6.500h4M7 6.500h4" stroke="#ee4a38"/><path d="M4 8.500h3M8 8.500h3" stroke="#ee4a38"/><path d="M5 10.500h3M9 10.500h1M11 10.500h1" stroke="#8a97a5"/></svg><div class="t" style="left:82px;top:155px">СПАРКРискиКлиентПовтИсп</div><svg class="a" style="left:455px;top:154px" width="16" height="16" viewBox="0 0 16 16"><path d="M1.500 4.500v-2.200q0-1.800 2-1.800t2 1.800v2.200" fill="#fff" stroke="#6a8aa5" stroke-width="1"/><rect x="0.500" y="4.500" width="6" height="4" rx="0.800" fill="#dde7f0" stroke="#3f5670" stroke-width="1"/><path d="M3.500 5.500v2.500" stroke="#33465c" stroke-width="1"/><path d="M7 7.500l4 1.500v6l-4-1.500z" fill="#f8e21c"/><path d="M11 9l4-1.500v6l-4 1.500z" fill="#c9a41c"/><path d="M7 7.500l4-1.500 4 1.500-4 1.500z" fill="#f6e88c"/></svg><svg class="a" style="left:61px;top:174px" width="14" height="13" viewBox="0 0 14 13"><rect x="0.500" y="0.500" width="13" height="12" fill="#eef4fa" stroke="#86a3c2"/><rect x="0" y="0" width="14" height="2.500" fill="#3f6f9f"/><path d="M2 4.500h1M4 4.500h6" stroke="#4a7ab0"/><path d="M2 6.500h4M7 6.500h4" stroke="#ee4a38"/><path d="M4 8.500h3M8 8.500h3" stroke="#ee4a38"/><path d="M5 10.500h3M9 10.500h1M11 10.500h1" stroke="#8a97a5"/></svg><div class="t" style="left:82px;top:174px">СПАРКРискиКлиентСервер</div><svg class="a" style="left:455px;top:173px" width="16" height="16" viewBox="0 0 16 16"><path d="M1.500 4.500v-2.200q0-1.800 2-1.800t2 1.800v2.200" fill="#fff" stroke="#6a8aa5" stroke-width="1"/><rect x="0.500" y="4.500" width="6" height="4" rx="0.800" fill="#dde7f0" stroke="#3f5670" stroke-width="1"/><path d="M3.500 5.500v2.500" stroke="#33465c" stroke-width="1"/><path d="M7 7.500l4 1.500v6l-4-1.500z" fill="#f8e21c"/><path d="M11 9l4-1.500v6l-4 1.500z" fill="#c9a41c"/><path d="M7 7.500l4-1.500 4 1.500-4 1.500z" fill="#f6e88c"/></svg><svg class="a" style="left:61px;top:193px" width="14" height="13" viewBox="0 0 14 13"><rect x="0.500" y="0.500" width="13" height="12" fill="#eef4fa" stroke="#86a3c2"/><rect x="0" y="0" width="14" height="2.500" fill="#3f6f9f"/><path d="M2 4.500h1M4 4.500h6" stroke="#4a7ab0"/><path d="M2 6.500h4M7 6.500h4" stroke="#ee4a38"/><path d="M4 8.500h3M8 8.500h3" stroke="#ee4a38"/><path d="M5 10.500h3M9 10.500h1M11 10.500h1" stroke="#8a97a5"/></svg><div class="t" style="left:82px;top:193px">СПАРКРискиКлиентСерверПереопределяемый</div><svg class="a" style="left:455px;top:192px" width="16" height="16" viewBox="0 0 16 16"><path d="M1.500 4.500v-2.200q0-1.800 2-1.800t2 1.800v2.200" fill="#fff" stroke="#6a8aa5" stroke-width="1"/><rect x="0.500" y="4.500" width="6" height="4" rx="0.800" fill="#dde7f0" stroke="#3f5670" stroke-width="1"/><path d="M3.500 5.500v2.500" stroke="#33465c" stroke-width="1"/><path d="M7 7.500l4 1.500v6l-4-1.500z" fill="#f8e21c"/><path d="M11 9l4-1.500v6l-4 1.500z" fill="#c9a41c"/><path d="M7 7.500l4-1.500 4 1.500-4 1.500z" fill="#f6e88c"/></svg><svg class="a" style="left:61px;top:212px" width="14" height="13" viewBox="0 0 14 13"><rect x="0.500" y="0.500" width="13" height="12" fill="#eef4fa" stroke="#86a3c2"/><rect x="0" y="0" width="14" height="2.500" fill="#3f6f9f"/><path d="M2 4.500h1M4 4.500h6" stroke="#4a7ab0"/><path d="M2 6.500h4M7 6.500h4" stroke="#ee4a38"/><path d="M4 8.500h3M8 8.500h3" stroke="#ee4a38"/><path d="M5 10.500h3M9 10.500h1M11 10.500h1" stroke="#8a97a5"/></svg><div class="t" style="left:82px;top:212px">СПАРКРискиМониторингСобытий</div><svg class="a" style="left:455px;top:211px" width="16" height="16" viewBox="0 0 16 16"><path d="M1.500 4.500v-2.200q0-1.800 2-1.800t2 1.800v2.200" fill="#fff" stroke="#6a8aa5" stroke-width="1"/><rect x="0.500" y="4.500" width="6" height="4" rx="0.800" fill="#dde7f0" stroke="#3f5670" stroke-width="1"/><path d="M3.500 5.500v2.500" stroke="#33465c" stroke-width="1"/><path d="M7 7.500l4 1.500v6l-4-1.500z" fill="#f8e21c"/><path d="M11 9l4-1.500v6l-4 1.500z" fill="#c9a41c"/><path d="M7 7.500l4-1.500 4 1.500-4 1.500z" fill="#f6e88c"/></svg><svg class="a" style="left:61px;top:231px" width="14" height="13" viewBox="0 0 14 13"><rect x="0.500" y="0.500" width="13" height="12" fill="#eef4fa" stroke="#86a3c2"/><rect x="0" y="0" width="14" height="2.500" fill="#3f6f9f"/><path d="M2 4.500h1M4 4.500h6" stroke="#4a7ab0"/><path d="M2 6.500h4M7 6.500h4" stroke="#ee4a38"/><path d="M4 8.500h3M8 8.500h3" stroke="#ee4a38"/><path d="M5 10.500h3M9 10.500h1M11 10.500h1" stroke="#8a97a5"/></svg><div class="t" style="left:82px;top:231px">СПАРКРискиПереопределяемый</div><svg class="a" style="left:455px;top:230px" width="16" height="16" viewBox="0 0 16 16"><path d="M1.500 4.500v-2.200q0-1.800 2-1.800t2 1.800v2.200" fill="#fff" stroke="#6a8aa5" stroke-width="1"/><rect x="0.500" y="4.500" width="6" height="4" rx="0.800" fill="#dde7f0" stroke="#3f5670" stroke-width="1"/><path d="M3.500 5.500v2.500" stroke="#33465c" stroke-width="1"/><path d="M7 7.500l4 1.500v6l-4-1.500z" fill="#f8e21c"/><path d="M11 9l4-1.500v6l-4 1.500z" fill="#c9a41c"/><path d="M7 7.500l4-1.500 4 1.500-4 1.500z" fill="#f6e88c"/></svg><svg class="a" style="left:61px;top:250px" width="14" height="13" viewBox="0 0 14 13"><rect x="0.500" y="0.500" width="13" height="12" fill="#eef4fa" stroke="#86a3c2"/><rect x="0" y="0" width="14" height="2.500" fill="#3f6f9f"/><path d="M2 4.500h1M4 4.500h6" stroke="#4a7ab0"/><path d="M2 6.500h4M7 6.500h4" stroke="#ee4a38"/><path d="M4 8.500h3M8 8.500h3" stroke="#ee4a38"/><path d="M5 10.500h3M9 10.500h1M11 10.500h1" stroke="#8a97a5"/></svg><div class="t" style="left:82px;top:250px">СПАРКРискиПовтИсп</div><svg class="a" style="left:455px;top:249px" width="16" height="16" viewBox="0 0 16 16"><path d="M1.500 4.500v-2.200q0-1.800 2-1.800t2 1.800v2.200" fill="#fff" stroke="#6a8aa5" stroke-width="1"/><rect x="0.500" y="4.500" width="6" height="4" rx="0.800" fill="#dde7f0" stroke="#3f5670" stroke-width="1"/><path d="M3.500 5.500v2.500" stroke="#33465c" stroke-width="1"/><path d="M7 7.500l4 1.500v6l-4-1.500z" fill="#f8e21c"/><path d="M11 9l4-1.500v6l-4 1.500z" fill="#c9a41c"/><path d="M7 7.500l4-1.500 4 1.500-4 1.500z" fill="#f6e88c"/></svg><svg class="a" style="left:61px;top:269px" width="14" height="13" viewBox="0 0 14 13"><rect x="0.500" y="0.500" width="13" height="12" fill="#eef4fa" stroke="#86a3c2"/><rect x="0" y="0" width="14" height="2.500" fill="#3f6f9f"/><path d="M2 4.500h1M4 4.500h6" stroke="#4a7ab0"/><path d="M2 6.500h4M7 6.500h4" stroke="#ee4a38"/><path d="M4 8.500h3M8 8.500h3" stroke="#ee4a38"/><path d="M5 10.500h3M9 10.500h1M11 10.500h1" stroke="#8a97a5"/></svg><div class="t" style="left:82px;top:269px">СписаниеБезналичныхДенежныхСредствЛокализация</div><svg class="a" style="left:455px;top:268px" width="16" height="16" viewBox="0 0 16 16"><path d="M1.500 4.500v-2.200q0-1.800 2-1.800t2 1.800v2.200" fill="#fff" stroke="#6a8aa5" stroke-width="1"/><rect x="0.500" y="4.500" width="6" height="4" rx="0.800" fill="#dde7f0" stroke="#3f5670" stroke-width="1"/><path d="M3.500 5.500v2.500" stroke="#33465c" stroke-width="1"/><path d="M7 7.500l4 1.500v6l-4-1.500z" fill="#f8e21c"/><path d="M11 9l4-1.500v6l-4 1.500z" fill="#c9a41c"/><path d="M7 7.500l4-1.500 4 1.500-4 1.500z" fill="#f6e88c"/></svg><svg class="a" style="left:61px;top:288px" width="14" height="13" viewBox="0 0 14 13"><rect x="0.500" y="0.500" width="13" height="12" fill="#eef4fa" stroke="#86a3c2"/><rect x="0" y="0" width="14" height="2.500" fill="#3f6f9f"/><path d="M2 4.500h1M4 4.500h6" stroke="#4a7ab0"/><path d="M2 6.500h4M7 6.500h4" stroke="#ee4a38"/><path d="M4 8.500h3M8 8.500h3" stroke="#ee4a38"/><path d="M5 10.500h3M9 10.500h1M11 10.500h1" stroke="#8a97a5"/></svg><div class="t" style="left:82px;top:288px">СписаниеЗадолженностиЛокализация</div><svg class="a" style="left:455px;top:287px" width="16" height="16" viewBox="0 0 16 16"><path d="M1.500 4.500v-2.200q0-1.800 2-1.800t2 1.800v2.200" fill="#fff" stroke="#6a8aa5" stroke-width="1"/><rect x="0.500" y="4.500" width="6" height="4" rx="0.800" fill="#dde7f0" stroke="#3f5670" stroke-width="1"/><path d="M3.500 5.500v2.500" stroke="#33465c" stroke-width="1"/><path d="M7 7.500l4 1.500v6l-4-1.500z" fill="#f8e21c"/><path d="M11 9l4-1.500v6l-4 1.500z" fill="#c9a41c"/><path d="M7 7.500l4-1.500 4 1.500-4 1.500z" fill="#f6e88c"/></svg><svg class="a" style="left:61px;top:307px" width="14" height="13" viewBox="0 0 14 13"><rect x="0.500" y="0.500" width="13" height="12" fill="#eef4fa" stroke="#86a3c2"/><rect x="0" y="0" width="14" height="2.500" fill="#3f6f9f"/><path d="M2 4.500h1M4 4.500h6" stroke="#4a7ab0"/><path d="M2 6.500h4M7 6.500h4" stroke="#ee4a38"/><path d="M4 8.500h3M8 8.500h3" stroke="#ee4a38"/><path d="M5 10.500h3M9 10.500h1M11 10.500h1" stroke="#8a97a5"/></svg><div class="t" style="left:82px;top:307px">СписаниеНДСНаРасходыЛокализация</div><svg class="a" style="left:455px;top:306px" width="16" height="16" viewBox="0 0 16 16"><path d="M1.500 4.500v-2.200q0-1.800 2-1.800t2 1.800v2.200" fill="#fff" stroke="#6a8aa5" stroke-width="1"/><rect x="0.500" y="4.500" width="6" height="4" rx="0.800" fill="#dde7f0" stroke="#3f5670" stroke-width="1"/><path d="M3.500 5.500v2.500" stroke="#33465c" stroke-width="1"/><path d="M7 7.500l4 1.500v6l-4-1.500z" fill="#f8e21c"/><path d="M11 9l4-1.500v6l-4 1.500z" fill="#c9a41c"/><path d="M7 7.500l4-1.500 4 1.500-4 1.500z" fill="#f6e88c"/></svg><svg class="a" style="left:61px;top:326px" width="14" height="13" viewBox="0 0 14 13"><rect x="0.500" y="0.500" width="13" height="12" fill="#eef4fa" stroke="#86a3c2"/><rect x="0" y="0" width="14" height="2.500" fill="#3f6f9f"/><path d="M2 4.500h1M4 4.500h6" stroke="#4a7ab0"/><path d="M2 6.500h4M7 6.500h4" stroke="#ee4a38"/><path d="M4 8.500h3M8 8.500h3" stroke="#ee4a38"/><path d="M5 10.500h3M9 10.500h1M11 10.500h1" stroke="#8a97a5"/></svg><div class="t" style="left:82px;top:326px">СписаниеНедостачТоваровЛокализация</div><svg class="a" style="left:455px;top:325px" width="16" height="16" viewBox="0 0 16 16"><path d="M1.500 4.500v-2.200q0-1.800 2-1.800t2 1.800v2.200" fill="#fff" stroke="#6a8aa5" stroke-width="1"/><rect x="0.500" y="4.500" width="6" height="4" rx="0.800" fill="#dde7f0" stroke="#3f5670" stroke-width="1"/><path d="M3.500 5.500v2.500" stroke="#33465c" stroke-width="1"/><path d="M7 7.500l4 1.500v6l-4-1.500z" fill="#f8e21c"/><path d="M11 9l4-1.500v6l-4 1.500z" fill="#c9a41c"/><path d="M7 7.500l4-1.500 4 1.500-4 1.500z" fill="#f6e88c"/></svg><svg class="a" style="left:61px;top:345px" width="14" height="13" viewBox="0 0 14 13"><rect x="0.500" y="0.500" width="13" height="12" fill="#eef4fa" stroke="#86a3c2"/><rect x="0" y="0" width="14" height="2.500" fill="#3f6f9f"/><path d="M2 4.500h1M4 4.500h6" stroke="#4a7ab0"/><path d="M2 6.500h4M7 6.500h4" stroke="#ee4a38"/><path d="M4 8.500h3M8 8.500h3" stroke="#ee4a38"/><path d="M5 10.500h3M9 10.500h1M11 10.500h1" stroke="#8a97a5"/></svg><div class="t" style="left:82px;top:345px">СписаниеПринятыхНаХранениеТоваровЛокализация</div><svg class="a" style="left:455px;top:344px" width="16" height="16" viewBox="0 0 16 16"><path d="M1.500 4.500v-2.200q0-1.800 2-1.800t2 1.800v2.200" fill="#fff" stroke="#6a8aa5" stroke-width="1"/><rect x="0.500" y="4.500" width="6" height="4" rx="0.800" fill="#dde7f0" stroke="#3f5670" stroke-width="1"/><path d="M3.500 5.500v2.500" stroke="#33465c" stroke-width="1"/><path d="M7 7.500l4 1.500v6l-4-1.500z" fill="#f8e21c"/><path d="M11 9l4-1.500v6l-4 1.500z" fill="#c9a41c"/><path d="M7 7.500l4-1.500 4 1.500-4 1.500z" fill="#f6e88c"/></svg><svg class="a" style="left:61px;top:364px" width="14" height="13" viewBox="0 0 14 13"><rect x="0.500" y="0.500" width="13" height="12" fill="#eef4fa" stroke="#86a3c2"/><rect x="0" y="0" width="14" height="2.500" fill="#3f6f9f"/><path d="M2 4.500h1M4 4.500h6" stroke="#4a7ab0"/><path d="M2 6.500h4M7 6.500h4" stroke="#ee4a38"/><path d="M4 8.500h3M8 8.500h3" stroke="#ee4a38"/><path d="M5 10.500h3M9 10.500h1M11 10.500h1" stroke="#8a97a5"/></svg><div class="t" style="left:82px;top:364px">СписаниеТоваровУХранителяЛокализация</div><svg class="a" style="left:455px;top:363px" width="16" height="16" viewBox="0 0 16 16"><path d="M1.500 4.500v-2.200q0-1.800 2-1.800t2 1.800v2.200" fill="#fff" stroke="#6a8aa5" stroke-width="1"/><rect x="0.500" y="4.500" width="6" height="4" rx="0.800" fill="#dde7f0" stroke="#3f5670" stroke-width="1"/><path d="M3.500 5.500v2.500" stroke="#33465c" stroke-width="1"/><path d="M7 7.500l4 1.500v6l-4-1.500z" fill="#f8e21c"/><path d="M11 9l4-1.500v6l-4 1.500z" fill="#c9a41c"/><path d="M7 7.500l4-1.500 4 1.500-4 1.500z" fill="#f6e88c"/></svg><svg class="a" style="left:61px;top:383px" width="14" height="13" viewBox="0 0 14 13"><rect x="0.500" y="0.500" width="13" height="12" fill="#eef4fa" stroke="#86a3c2"/><rect x="0" y="0" width="14" height="2.500" fill="#3f6f9f"/><path d="M2 4.500h1M4 4.500h6" stroke="#4a7ab0"/><path d="M2 6.500h4M7 6.500h4" stroke="#ee4a38"/><path d="M4 8.500h3M8 8.500h3" stroke="#ee4a38"/><path d="M5 10.500h3M9 10.500h1M11 10.500h1" stroke="#8a97a5"/></svg><div class="t" style="left:82px;top:383px">СпискиВыбораКлиентСервер</div><svg class="a" style="left:455px;top:382px" width="16" height="16" viewBox="0 0 16 16"><path d="M1.500 4.500v-2.200q0-1.800 2-1.800t2 1.800v2.200" fill="#fff" stroke="#6a8aa5" stroke-width="1"/><rect x="0.500" y="4.500" width="6" height="4" rx="0.800" fill="#dde7f0" stroke="#3f5670" stroke-width="1"/><path d="M3.500 5.500v2.500" stroke="#33465c" stroke-width="1"/><path d="M7 7.500l4 1.500v6l-4-1.500z" fill="#f8e21c"/><path d="M11 9l4-1.500v6l-4 1.500z" fill="#c9a41c"/><path d="M7 7.500l4-1.500 4 1.500-4 1.500z" fill="#f6e88c"/></svg><svg class="a" style="left:61px;top:402px" width="14" height="13" viewBox="0 0 14 13"><rect x="0.500" y="0.500" width="13" height="12" fill="#eef4fa" stroke="#86a3c2"/><rect x="0" y="0" width="14" height="2.500" fill="#3f6f9f"/><path d="M2 4.500h1M4 4.500h6" stroke="#4a7ab0"/><path d="M2 6.500h4M7 6.500h4" stroke="#ee4a38"/><path d="M4 8.500h3M8 8.500h3" stroke="#ee4a38"/><path d="M5 10.500h3M9 10.500h1M11 10.500h1" stroke="#8a97a5"/></svg><div class="t" style="left:82px;top:402px">СтандартныеПодсистемыВызовСервера</div><svg class="a" style="left:455px;top:401px" width="16" height="16" viewBox="0 0 16 16"><path d="M1.500 4.500v-2.200q0-1.800 2-1.800t2 1.800v2.200" fill="#fff" stroke="#6a8aa5" stroke-width="1"/><rect x="0.500" y="4.500" width="6" height="4" rx="0.800" fill="#dde7f0" stroke="#3f5670" stroke-width="1"/><path d="M3.500 5.500v2.500" stroke="#33465c" stroke-width="1"/><path d="M7 7.500l4 1.500v6l-4-1.500z" fill="#f8e21c"/><path d="M11 9l4-1.500v6l-4 1.500z" fill="#c9a41c"/><path d="M7 7.500l4-1.500 4 1.500-4 1.500z" fill="#f6e88c"/></svg><svg class="a" style="left:61px;top:421px" width="14" height="13" viewBox="0 0 14 13"><rect x="0.500" y="0.500" width="13" height="12" fill="#eef4fa" stroke="#86a3c2"/><rect x="0" y="0" width="14" height="2.500" fill="#3f6f9f"/><path d="M2 4.500h1M4 4.500h6" stroke="#4a7ab0"/><path d="M2 6.500h4M7 6.500h4" stroke="#ee4a38"/><path d="M4 8.500h3M8 8.500h3" stroke="#ee4a38"/><path d="M5 10.500h3M9 10.500h1M11 10.500h1" stroke="#8a97a5"/></svg><div class="t" style="left:82px;top:421px">СтандартныеПодсистемыГлобальный</div><svg class="a" style="left:455px;top:420px" width="16" height="16" viewBox="0 0 16 16"><path d="M1.500 4.500v-2.200q0-1.800 2-1.800t2 1.800v2.200" fill="#fff" stroke="#6a8aa5" stroke-width="1"/><rect x="0.500" y="4.500" width="6" height="4" rx="0.800" fill="#dde7f0" stroke="#3f5670" stroke-width="1"/><path d="M3.500 5.500v2.500" stroke="#33465c" stroke-width="1"/><path d="M7 7.500l4 1.500v6l-4-1.500z" fill="#f8e21c"/><path d="M11 9l4-1.500v6l-4 1.500z" fill="#c9a41c"/><path d="M7 7.500l4-1.500 4 1.500-4 1.500z" fill="#f6e88c"/></svg><svg class="a" style="left:61px;top:440px" width="14" height="13" viewBox="0 0 14 13"><rect x="0.500" y="0.500" width="13" height="12" fill="#eef4fa" stroke="#86a3c2"/><rect x="0" y="0" width="14" height="2.500" fill="#3f6f9f"/><path d="M2 4.500h1M4 4.500h6" stroke="#4a7ab0"/><path d="M2 6.500h4M7 6.500h4" stroke="#ee4a38"/><path d="M4 8.500h3M8 8.500h3" stroke="#ee4a38"/><path d="M5 10.500h3M9 10.500h1M11 10.500h1" stroke="#8a97a5"/></svg><div class="a" style="left:80px;top:437px;width:173px;height:19px;background:#7098d0;border:1px solid #6391cd"></div><div class="t" style="left:82px;top:440px;color:#fff">СтандартныеПодсистемыКлиент</div><svg class="a" style="left:455px;top:439px" width="16" height="16" viewBox="0 0 16 16"><path d="M1.500 4.500v-2.200q0-1.800 2-1.800t2 1.800v2.200" fill="#fff" stroke="#6a8aa5" stroke-width="1"/><rect x="0.500" y="4.500" width="6" height="4" rx="0.800" fill="#dde7f0" stroke="#3f5670" stroke-width="1"/><path d="M3.500 5.500v2.500" stroke="#33465c" stroke-width="1"/><path d="M7 7.500l4 1.500v6l-4-1.500z" fill="#f8e21c"/><path d="M11 9l4-1.500v6l-4 1.500z" fill="#c9a41c"/><path d="M7 7.500l4-1.500 4 1.500-4 1.500z" fill="#f6e88c"/></svg><svg class="a" style="left:61px;top:459px" width="14" height="13" viewBox="0 0 14 13"><rect x="0.500" y="0.500" width="13" height="12" fill="#eef4fa" stroke="#86a3c2"/><rect x="0" y="0" width="14" height="2.500" fill="#3f6f9f"/><path d="M2 4.500h1M4 4.500h6" stroke="#4a7ab0"/><path d="M2 6.500h4M7 6.500h4" stroke="#ee4a38"/><path d="M4 8.500h3M8 8.500h3" stroke="#ee4a38"/><path d="M5 10.500h3M9 10.500h1M11 10.500h1" stroke="#8a97a5"/></svg><div class="t" style="left:82px;top:459px">СтандартныеПодсистемыКлиентПовтИсп</div><svg class="a" style="left:455px;top:458px" width="16" height="16" viewBox="0 0 16 16"><path d="M1.500 4.500v-2.200q0-1.800 2-1.800t2 1.800v2.200" fill="#fff" stroke="#6a8aa5" stroke-width="1"/><rect x="0.500" y="4.500" width="6" height="4" rx="0.800" fill="#dde7f0" stroke="#3f5670" stroke-width="1"/><path d="M3.500 5.500v2.500" stroke="#33465c" stroke-width="1"/><path d="M7 7.500l4 1.500v6l-4-1.500z" fill="#f8e21c"/><path d="M11 9l4-1.500v6l-4 1.500z" fill="#c9a41c"/><path d="M7 7.500l4-1.500 4 1.500-4 1.500z" fill="#f6e88c"/></svg><svg class="a" style="left:61px;top:478px" width="14" height="13" viewBox="0 0 14 13"><rect x="0.500" y="0.500" width="13" height="12" fill="#eef4fa" stroke="#86a3c2"/><rect x="0" y="0" width="14" height="2.500" fill="#3f6f9f"/><path d="M2 4.500h1M4 4.500h6" stroke="#4a7ab0"/><path d="M2 6.500h4M7 6.500h4" stroke="#ee4a38"/><path d="M4 8.500h3M8 8.500h3" stroke="#ee4a38"/><path d="M5 10.500h3M9 10.500h1M11 10.500h1" stroke="#8a97a5"/></svg><div class="t" style="left:82px;top:478px">СтандартныеПодсистемыКлиентСерверЛокализация</div><svg class="a" style="left:455px;top:477px" width="16" height="16" viewBox="0 0 16 16"><path d="M1.500 4.500v-2.200q0-1.800 2-1.800t2 1.800v2.200" fill="#fff" stroke="#6a8aa5" stroke-width="1"/><rect x="0.500" y="4.500" width="6" height="4" rx="0.800" fill="#dde7f0" stroke="#3f5670" stroke-width="1"/><path d="M3.500 5.500v2.500" stroke="#33465c" stroke-width="1"/><path d="M7 7.500l4 1.500v6l-4-1.500z" fill="#f8e21c"/><path d="M11 9l4-1.500v6l-4 1.500z" fill="#c9a41c"/><path d="M7 7.500l4-1.500 4 1.500-4 1.500z" fill="#f6e88c"/></svg><svg class="a" style="left:61px;top:497px" width="14" height="13" viewBox="0 0 14 13"><rect x="0.500" y="0.500" width="13" height="12" fill="#eef4fa" stroke="#86a3c2"/><rect x="0" y="0" width="14" height="2.500" fill="#3f6f9f"/><path d="M2 4.500h1M4 4.500h6" stroke="#4a7ab0"/><path d="M2 6.500h4M7 6.500h4" stroke="#ee4a38"/><path d="M4 8.500h3M8 8.500h3" stroke="#ee4a38"/><path d="M5 10.500h3M9 10.500h1M11 10.500h1" stroke="#8a97a5"/></svg><div class="t" style="left:82px;top:497px">СтандартныеПодсистемыПовтИсп</div><svg class="a" style="left:455px;top:496px" width="16" height="16" viewBox="0 0 16 16"><path d="M1.500 4.500v-2.200q0-1.800 2-1.800t2 1.800v2.200" fill="#fff" stroke="#6a8aa5" stroke-width="1"/><rect x="0.500" y="4.500" width="6" height="4" rx="0.800" fill="#dde7f0" stroke="#3f5670" stroke-width="1"/><path d="M3.500 5.500v2.500" stroke="#33465c" stroke-width="1"/><path d="M7 7.500l4 1.500v6l-4-1.500z" fill="#f8e21c"/><path d="M11 9l4-1.500v6l-4 1.500z" fill="#c9a41c"/><path d="M7 7.500l4-1.500 4 1.500-4 1.500z" fill="#f6e88c"/></svg><svg class="a" style="left:61px;top:516px" width="14" height="13" viewBox="0 0 14 13"><rect x="0.500" y="0.500" width="13" height="12" fill="#eef4fa" stroke="#86a3c2"/><rect x="0" y="0" width="14" height="2.500" fill="#3f6f9f"/><path d="M2 4.500h1M4 4.500h6" stroke="#4a7ab0"/><path d="M2 6.500h4M7 6.500h4" stroke="#ee4a38"/><path d="M4 8.500h3M8 8.500h3" stroke="#ee4a38"/><path d="M5 10.500h3M9 10.500h1M11 10.500h1" stroke="#8a97a5"/></svg><div class="t" style="left:82px;top:516px">СтандартныеПодсистемыСервер</div><svg class="a" style="left:455px;top:515px" width="16" height="16" viewBox="0 0 16 16"><path d="M1.500 4.500v-2.200q0-1.800 2-1.800t2 1.800v2.200" fill="#fff" stroke="#6a8aa5" stroke-width="1"/><rect x="0.500" y="4.500" width="6" height="4" rx="0.800" fill="#dde7f0" stroke="#3f5670" stroke-width="1"/><path d="M3.500 5.500v2.500" stroke="#33465c" stroke-width="1"/><path d="M7 7.500l4 1.500v6l-4-1.500z" fill="#f8e21c"/><path d="M11 9l4-1.500v6l-4 1.500z" fill="#c9a41c"/><path d="M7 7.500l4-1.500 4 1.500-4 1.500z" fill="#f6e88c"/></svg><svg class="a" style="left:61px;top:535px" width="14" height="13" viewBox="0 0 14 13"><rect x="0.500" y="0.500" width="13" height="12" fill="#eef4fa" stroke="#86a3c2"/><rect x="0" y="0" width="14" height="2.500" fill="#3f6f9f"/><path d="M2 4.500h1M4 4.500h6" stroke="#4a7ab0"/><path d="M2 6.500h4M7 6.500h4" stroke="#ee4a38"/><path d="M4 8.500h3M8 8.500h3" stroke="#ee4a38"/><path d="M5 10.500h3M9 10.500h1M11 10.500h1" stroke="#8a97a5"/></svg><div class="t" style="left:82px;top:535px">СтатьиДоходовКлиентЛокализация</div><svg class="a" style="left:455px;top:534px" width="16" height="16" viewBox="0 0 16 16"><path d="M1.500 4.500v-2.200q0-1.800 2-1.800t2 1.800v2.200" fill="#fff" stroke="#6a8aa5" stroke-width="1"/><rect x="0.500" y="4.500" width="6" height="4" rx="0.800" fill="#dde7f0" stroke="#3f5670" stroke-width="1"/><path d="M3.500 5.500v2.500" stroke="#33465c" stroke-width="1"/><path d="M7 7.500l4 1.500v6l-4-1.500z" fill="#f8e21c"/><path d="M11 9l4-1.500v6l-4 1.500z" fill="#c9a41c"/><path d="M7 7.500l4-1.500 4 1.500-4 1.500z" fill="#f6e88c"/></svg><svg class="a" style="left:61px;top:554px" width="14" height="13" viewBox="0 0 14 13"><rect x="0.500" y="0.500" width="13" height="12" fill="#eef4fa" stroke="#86a3c2"/><rect x="0" y="0" width="14" height="2.500" fill="#3f6f9f"/><path d="M2 4.500h1M4 4.500h6" stroke="#4a7ab0"/><path d="M2 6.500h4M7 6.500h4" stroke="#ee4a38"/><path d="M4 8.500h3M8 8.500h3" stroke="#ee4a38"/><path d="M5 10.500h3M9 10.500h1M11 10.500h1" stroke="#8a97a5"/></svg><div class="t" style="left:82px;top:554px">СтатьиДоходовЛокализация</div><svg class="a" style="left:455px;top:553px" width="16" height="16" viewBox="0 0 16 16"><path d="M1.500 4.500v-2.200q0-1.800 2-1.800t2 1.800v2.200" fill="#fff" stroke="#6a8aa5" stroke-width="1"/><rect x="0.500" y="4.500" width="6" height="4" rx="0.800" fill="#dde7f0" stroke="#3f5670" stroke-width="1"/><path d="M3.500 5.500v2.500" stroke="#33465c" stroke-width="1"/><path d="M7 7.500l4 1.500v6l-4-1.500z" fill="#f8e21c"/><path d="M11 9l4-1.500v6l-4 1.500z" fill="#c9a41c"/><path d="M7 7.500l4-1.500 4 1.500-4 1.500z" fill="#f6e88c"/></svg><svg class="a" style="left:61px;top:573px" width="14" height="13" viewBox="0 0 14 13"><rect x="0.500" y="0.500" width="13" height="12" fill="#eef4fa" stroke="#86a3c2"/><rect x="0" y="0" width="14" height="2.500" fill="#3f6f9f"/><path d="M2 4.500h1M4 4.500h6" stroke="#4a7ab0"/><path d="M2 6.500h4M7 6.500h4" stroke="#ee4a38"/><path d="M4 8.500h3M8 8.500h3" stroke="#ee4a38"/><path d="M5 10.500h3M9 10.500h1M11 10.500h1" stroke="#8a97a5"/></svg><div class="t" style="left:82px;top:573px">СтатьиРасходовКлиентЛокализация</div><svg class="a" style="left:455px;top:572px" width="16" height="16" viewBox="0 0 16 16"><path d="M1.500 4.500v-2.200q0-1.800 2-1.800t2 1.800v2.200" fill="#fff" stroke="#6a8aa5" stroke-width="1"/><rect x="0.500" y="4.500" width="6" height="4" rx="0.800" fill="#dde7f0" stroke="#3f5670" stroke-width="1"/><path d="M3.500 5.500v2.500" stroke="#33465c" stroke-width="1"/><path d="M7 7.500l4 1.500v6l-4-1.500z" fill="#f8e21c"/><path d="M11 9l4-1.500v6l-4 1.500z" fill="#c9a41c"/><path d="M7 7.500l4-1.500 4 1.500-4 1.500z" fill="#f6e88c"/></svg><svg class="a" style="left:61px;top:592px" width="14" height="13" viewBox="0 0 14 13"><rect x="0.500" y="0.500" width="13" height="12" fill="#eef4fa" stroke="#86a3c2"/><rect x="0" y="0" width="14" height="2.500" fill="#3f6f9f"/><path d="M2 4.500h1M4 4.500h6" stroke="#4a7ab0"/><path d="M2 6.500h4M7 6.500h4" stroke="#ee4a38"/><path d="M4 8.500h3M8 8.500h3" stroke="#ee4a38"/><path d="M5 10.500h3M9 10.500h1M11 10.500h1" stroke="#8a97a5"/></svg><div class="t" style="left:82px;top:592px">СтатьиРасходовЛокализация</div><svg class="a" style="left:455px;top:591px" width="16" height="16" viewBox="0 0 16 16"><path d="M1.500 4.500v-2.200q0-1.800 2-1.800t2 1.800v2.200" fill="#fff" stroke="#6a8aa5" stroke-width="1"/><rect x="0.500" y="4.500" width="6" height="4" rx="0.800" fill="#dde7f0" stroke="#3f5670" stroke-width="1"/><path d="M3.500 5.500v2.500" stroke="#33465c" stroke-width="1"/><path d="M7 7.500l4 1.500v6l-4-1.500z" fill="#f8e21c"/><path d="M11 9l4-1.500v6l-4 1.500z" fill="#c9a41c"/><path d="M7 7.500l4-1.500 4 1.500-4 1.500z" fill="#f6e88c"/></svg><svg class="a" style="left:61px;top:611px" width="14" height="13" viewBox="0 0 14 13"><rect x="0.500" y="0.500" width="13" height="12" fill="#eef4fa" stroke="#86a3c2"/><rect x="0" y="0" width="14" height="2.500" fill="#3f6f9f"/><path d="M2 4.500h1M4 4.500h6" stroke="#4a7ab0"/><path d="M2 6.500h4M7 6.500h4" stroke="#ee4a38"/><path d="M4 8.500h3M8 8.500h3" stroke="#ee4a38"/><path d="M5 10.500h3M9 10.500h1M11 10.500h1" stroke="#8a97a5"/></svg><div class="t" style="left:82px;top:611px">СторноЛокализация</div><svg class="a" style="left:455px;top:610px" width="16" height="16" viewBox="0 0 16 16"><path d="M1.500 4.500v-2.200q0-1.800 2-1.800t2 1.800v2.200" fill="#fff" stroke="#6a8aa5" stroke-width="1"/><rect x="0.500" y="4.500" width="6" height="4" rx="0.800" fill="#dde7f0" stroke="#3f5670" stroke-width="1"/><path d="M3.500 5.500v2.500" stroke="#33465c" stroke-width="1"/><path d="M7 7.500l4 1.500v6l-4-1.500z" fill="#f8e21c"/><path d="M11 9l4-1.500v6l-4 1.500z" fill="#c9a41c"/><path d="M7 7.500l4-1.500 4 1.500-4 1.500z" fill="#f6e88c"/></svg><svg class="a" style="left:61px;top:630px" width="14" height="13" viewBox="0 0 14 13"><rect x="0.500" y="0.500" width="13" height="12" fill="#eef4fa" stroke="#86a3c2"/><rect x="0" y="0" width="14" height="2.500" fill="#3f6f9f"/><path d="M2 4.500h1M4 4.500h6" stroke="#4a7ab0"/><path d="M2 6.500h4M7 6.500h4" stroke="#ee4a38"/><path d="M4 8.500h3M8 8.500h3" stroke="#ee4a38"/><path d="M5 10.500h3M9 10.500h1M11 10.500h1" stroke="#8a97a5"/></svg><div class="t" style="left:82px;top:630px">СтроковыеФункции</div><svg class="a" style="left:455px;top:629px" width="16" height="16" viewBox="0 0 16 16"><path d="M1.500 4.500v-2.200q0-1.800 2-1.800t2 1.800v2.200" fill="#fff" stroke="#6a8aa5" stroke-width="1"/><rect x="0.500" y="4.500" width="6" height="4" rx="0.800" fill="#dde7f0" stroke="#3f5670" stroke-width="1"/><path d="M3.500 5.500v2.500" stroke="#33465c" stroke-width="1"/><path d="M7 7.500l4 1.500v6l-4-1.500z" fill="#f8e21c"/><path d="M11 9l4-1.500v6l-4 1.500z" fill="#c9a41c"/><path d="M7 7.500l4-1.500 4 1.500-4 1.500z" fill="#f6e88c"/></svg><svg class="a" style="left:61px;top:649px" width="14" height="13" viewBox="0 0 14 13"><rect x="0.500" y="0.500" width="13" height="12" fill="#eef4fa" stroke="#86a3c2"/><rect x="0" y="0" width="14" height="2.500" fill="#3f6f9f"/><path d="M2 4.500h1M4 4.500h6" stroke="#4a7ab0"/><path d="M2 6.500h4M7 6.500h4" stroke="#ee4a38"/><path d="M4 8.500h3M8 8.500h3" stroke="#ee4a38"/><path d="M5 10.500h3M9 10.500h1M11 10.500h1" stroke="#8a97a5"/></svg><div class="t" style="left:82px;top:649px">СтроковыеФункцииКлиент</div><svg class="a" style="left:455px;top:648px" width="16" height="16" viewBox="0 0 16 16"><path d="M1.500 4.500v-2.200q0-1.800 2-1.800t2 1.800v2.200" fill="#fff" stroke="#6a8aa5" stroke-width="1"/><rect x="0.500" y="4.500" width="6" height="4" rx="0.800" fill="#dde7f0" stroke="#3f5670" stroke-width="1"/><path d="M3.500 5.500v2.500" stroke="#33465c" stroke-width="1"/><path d="M7 7.500l4 1.500v6l-4-1.500z" fill="#f8e21c"/><path d="M11 9l4-1.500v6l-4 1.500z" fill="#c9a41c"/><path d="M7 7.500l4-1.500 4 1.500-4 1.500z" fill="#f6e88c"/></svg><svg class="a" style="left:61px;top:668px" width="14" height="13" viewBox="0 0 14 13"><rect x="0.500" y="0.500" width="13" height="12" fill="#eef4fa" stroke="#86a3c2"/><rect x="0" y="0" width="14" height="2.500" fill="#3f6f9f"/><path d="M2 4.500h1M4 4.500h6" stroke="#4a7ab0"/><path d="M2 6.500h4M7 6.500h4" stroke="#ee4a38"/><path d="M4 8.500h3M8 8.500h3" stroke="#ee4a38"/><path d="M5 10.500h3M9 10.500h1M11 10.500h1" stroke="#8a97a5"/></svg><div class="t" style="left:82px;top:668px">СтроковыеФункцииКлиентСервер</div><svg class="a" style="left:455px;top:667px" width="16" height="16" viewBox="0 0 16 16"><path d="M1.500 4.500v-2.200q0-1.800 2-1.800t2 1.800v2.200" fill="#fff" stroke="#6a8aa5" stroke-width="1"/><rect x="0.500" y="4.500" width="6" height="4" rx="0.800" fill="#dde7f0" stroke="#3f5670" stroke-width="1"/><path d="M3.500 5.500v2.500" stroke="#33465c" stroke-width="1"/><path d="M7 7.500l4 1.500v6l-4-1.500z" fill="#f8e21c"/><path d="M11 9l4-1.500v6l-4 1.500z" fill="#c9a41c"/><path d="M7 7.500l4-1.500 4 1.500-4 1.500z" fill="#f6e88c"/></svg><svg class="a" style="left:61px;top:687px" width="14" height="13" viewBox="0 0 14 13"><rect x="0.500" y="0.500" width="13" height="12" fill="#eef4fa" stroke="#86a3c2"/><rect x="0" y="0" width="14" height="2.500" fill="#3f6f9f"/><path d="M2 4.500h1M4 4.500h6" stroke="#4a7ab0"/><path d="M2 6.500h4M7 6.500h4" stroke="#ee4a38"/><path d="M4 8.500h3M8 8.500h3" stroke="#ee4a38"/><path d="M5 10.500h3M9 10.500h1M11 10.500h1" stroke="#8a97a5"/></svg><div class="t" style="left:82px;top:687px">СтроковыеФункцииКлиентСерверРФ</div><svg class="a" style="left:455px;top:686px" width="16" height="16" viewBox="0 0 16 16"><path d="M1.500 4.500v-2.200q0-1.800 2-1.800t2 1.800v2.200" fill="#fff" stroke="#6a8aa5" stroke-width="1"/><rect x="0.500" y="4.500" width="6" height="4" rx="0.800" fill="#dde7f0" stroke="#3f5670" stroke-width="1"/><path d="M3.500 5.500v2.500" stroke="#33465c" stroke-width="1"/><path d="M7 7.500l4 1.500v6l-4-1.500z" fill="#f8e21c"/><path d="M11 9l4-1.500v6l-4 1.500z" fill="#c9a41c"/><path d="M7 7.500l4-1.500 4 1.500-4 1.500z" fill="#f6e88c"/></svg><svg class="a" style="left:61px;top:706px" width="14" height="13" viewBox="0 0 14 13"><rect x="0.500" y="0.500" width="13" height="12" fill="#eef4fa" stroke="#86a3c2"/><rect x="0" y="0" width="14" height="2.500" fill="#3f6f9f"/><path d="M2 4.500h1M4 4.500h6" stroke="#4a7ab0"/><path d="M2 6.500h4M7 6.500h4" stroke="#ee4a38"/><path d="M4 8.500h3M8 8.500h3" stroke="#ee4a38"/><path d="M5 10.500h3M9 10.500h1M11 10.500h1" stroke="#8a97a5"/></svg><div class="t" style="left:82px;top:706px">СтруктураПодчиненностиПереопределяемый</div><svg class="a" style="left:455px;top:705px" width="16" height="16" viewBox="0 0 16 16"><path d="M1.500 4.500v-2.200q0-1.800 2-1.800t2 1.800v2.200" fill="#fff" stroke="#6a8aa5" stroke-width="1"/><rect x="0.500" y="4.500" width="6" height="4" rx="0.800" fill="#dde7f0" stroke="#3f5670" stroke-width="1"/><path d="M3.500 5.500v2.500" stroke="#33465c" stroke-width="1"/><path d="M7 7.500l4 1.500v6l-4-1.500z" fill="#f8e21c"/><path d="M11 9l4-1.500v6l-4 1.500z" fill="#c9a41c"/><path d="M7 7.500l4-1.500 4 1.500-4 1.500z" fill="#f6e88c"/></svg><svg class="a" style="left:61px;top:725px" width="14" height="13" viewBox="0 0 14 13"><rect x="0.500" y="0.500" width="13" height="12" fill="#eef4fa" stroke="#86a3c2"/><rect x="0" y="0" width="14" height="2.500" fill="#3f6f9f"/><path d="M2 4.500h1M4 4.500h6" stroke="#4a7ab0"/><path d="M2 6.500h4M7 6.500h4" stroke="#ee4a38"/><path d="M4 8.500h3M8 8.500h3" stroke="#ee4a38"/><path d="M5 10.500h3M9 10.500h1M11 10.500h1" stroke="#8a97a5"/></svg><div class="t" style="left:82px;top:725px">СтруктураПодчиненностиСлужебный</div><svg class="a" style="left:455px;top:724px" width="16" height="16" viewBox="0 0 16 16"><path d="M1.500 4.500v-2.200q0-1.800 2-1.800t2 1.800v2.200" fill="#fff" stroke="#6a8aa5" stroke-width="1"/><rect x="0.500" y="4.500" width="6" height="4" rx="0.800" fill="#dde7f0" stroke="#3f5670" stroke-width="1"/><path d="M3.500 5.500v2.500" stroke="#33465c" stroke-width="1"/><path d="M7 7.500l4 1.500v6l-4-1.500z" fill="#f8e21c"/><path d="M11 9l4-1.500v6l-4 1.500z" fill="#c9a41c"/><path d="M7 7.500l4-1.500 4 1.500-4 1.500z" fill="#f6e88c"/></svg></div><div class="a" style="left:478px;top:170px;width:16px;height:736px;background:#faf8ee;border-left:1px solid #d6cfac"></div><div class="a" style="left:478px;top:170px;width:16px;height:21px;background:linear-gradient(#fdfcf2,#efe9cc);border:1px solid #d6cfac;border-top:none;border-right:none"></div><div class="a" style="left:478px;top:885px;width:16px;height:21px;background:linear-gradient(#fdfcf2,#efe9cc);border:1px solid #d6cfac;border-bottom:none;border-right:none"></div><svg class="a" style="left:483px;top:177px" width="7" height="7" viewBox="0 0 7 7" ><path d="M3.500 0L7 7H0z" fill="#8f8f8f"/></svg><svg class="a" style="left:483px;top:892px" width="7" height="7" viewBox="0 0 7 7" ><path d="M3.500 7L7 0H0z" fill="#8f8f8f"/></svg><div class="a" style="left:478px;top:759px;width:16px;height:16px;background:linear-gradient(90deg,#fdfcf2,#eee7c8);border:1px solid #d6cfac;border-right:none"></div><div class="a" style="left:485px;top:765px;width:4px;height:4px;border-radius:2px;background:#ddd6b8"></div><div class="a" style="left:2px;top:908px;width:172px;height:20px;background:#b7d0ea;border:1px solid #9fb9d6"></div><svg class="a" style="left:5px;top:912px" width="14" height="13" viewBox="0 0 14 13" ><rect x="0.500" y="0.500" width="13" height="12" fill="#f4f7fb" stroke="#6a8fb5"/><rect x="0.500" y="0.500" width="13" height="2.500" fill="#4f7fae"/><path d="M2.500 5.500h9M2.500 8h9M2.500 10.500h9" stroke="#556" stroke-width="1"/></svg><div class="t" style="left:21px;top:912px;color:#222">Справочник Номенклатура: ...</div><div class="a" style="left:175px;top:908px;width:172px;height:20px;background:#b0b0b0;border:1px solid #a2a2a2"></div><svg class="a" style="left:179px;top:911px" width="14" height="14" viewBox="0 0 14 14" ><path d="M0.500 1.500h9M0.500 3.500h8M0.500 5.500h6M0.500 7.500h4" stroke="#777"/><path d="M11.500 1v12h-9v-3" fill="none" stroke="#777"/></svg><div class="t" style="left:194px;top:912px;color:#333;letter-spacing:-0.78px">Общий модуль Стандартны...</div><div class="t" style="left:6px;top:933px;color:#1a1400">Для получения подсказки нажмите F1</div><div class="a" style="left:1px;top:930px;width:1440px;height:19px;border:1px solid #e4dfc6;border-left:none"></div><div class="a" style="left:1445px;top:930px;width:29px;height:19px;border:1px solid #e4dfc6"></div><div class="t" style="left:1449px;top:933px;color:#a08238">CAP</div><div class="a" style="left:1479px;top:930px;width:33px;height:19px;border:1px solid #e4dfc6"></div><div class="t" style="left:1483px;top:933px;color:#1a1400">NUM</div><div class="a" style="left:1517px;top:930px;width:24px;height:19px;border:1px solid #e4dfc6"></div><div class="t" style="left:1520px;top:933px;color:#1a1400">ru</div><svg class="a" style="left:1531px;top:938px" width="6" height="3" viewBox="0 0 6 3" ><path d="M0 0h6L3.0 3z" fill="#3a2a00"/></svg><svg class="a" style="left:1556px;top:934px" width="15" height="15" viewBox="0 0 15 15" ><path d="M15 2L2 15M15 6L6 15M15 10L10 15" stroke="#b5ab80" stroke-width="1.300"/></svg><div class="a" style="left:499px;top:106px;width:1072px;height:801px;background:#b0b0b0;border-left:1px solid #8f8f8f;border-top:1px solid #8f8f8f"></div><div class="a" style="left:500px;top:107px;width:1071px;height:800px;border-left:1px solid #676767;border-top:1px solid #676767"></div><div class="a" style="left:501px;top:108px;width:1070px;height:799px;border-left:1px solid #f4f4f4;border-top:1px solid #f4f4f4"></div><div class="a" style="left:1569px;top:108px;width:2px;height:799px;background:#fdfdfd"></div><svg class="a" style="left:508px;top:114px" width="13" height="14" viewBox="0 0 13 14" ><path d="M0.500 1.500h9M0.500 3.500h8M0.500 5.500h6M0.500 7.500h4" stroke="#6a6a6a"/><path d="M11.500 1v12h-9v-3" fill="none" stroke="#6a6a6a"/></svg><div class="t" style="left:527px;top:115px;font-weight:bold;color:#646464;letter-spacing:-0.1px">Общий модуль СтандартныеПодсистемыКлиент: Модуль [Только для чтения]</div><div class="a" style="left:504px;top:130px;width:1065px;height:777px;background:#fff;border-top:1px solid #6e6e6e;border-left:1px solid #6e6e6e;border-right:1px solid #e8e8e8"></div><div class="a" style="left:505px;top:905px;width:1064px;height:1px;background:#e8e8e8"></div><div class="a" style="left:505px;top:131px;width:16px;height:774px;background:repeating-conic-gradient(#f5f2dd 0 25%,#dcdcc8 0 50%) 0 0/2px 2px"></div><div class="mono" style="left:1364px;top:356px"><span class="id">еПараметры</span><span class="kw"> = Неопределено)</span></div><div class="mono" style="left:1364px;top:452px"><span class="kw">о) Экспорт</span></div><div class="fold" style="left:1454px;top:451px;width:18px"><span class="dots">...</span></div><div class="mono" style="left:1364px;top:596px"><span class="kw">на) Экспорт</span></div><div class="fold" style="left:1462px;top:595px;width:18px"><span class="dots">...</span></div><div class="fold" style="left:1366px;top:675px;width:34px"><span style="font-size:13.33px;margin-left:1px">//</span><span style="font-size:3px"> </span><span class="dots">...</span></div><div class="a" style="left:529px;top:721px;width:1px;height:185px;background:#333"></div><svg class="a" style="left:525px;top:727px" width="9" height="9" viewBox="0 0 9 9" ><rect x="0.500" y="0.500" width="8" height="8" fill="#fff" stroke="#333"/><path d="M2 4.500h5" stroke="#333"/><path d="M4.500 2v5" stroke="#333"/></svg><div class="mono" style="left:540px;top:724px"><span class="cm">// Возвращает значения параметров, необходимых для работы клиентского кода</span></div><div class="fold" style="left:1142px;top:723px;width:34px"><span style="font-size:13.33px;margin-left:1px">//</span><span style="font-size:3px"> </span><span class="dots">...</span></div><svg class="a" style="left:525px;top:743px" width="9" height="9" viewBox="0 0 9 9" ><rect x="0.500" y="0.500" width="8" height="8" fill="#fff" stroke="#333"/><path d="M2 4.500h5" stroke="#333"/><path d="M4.500 2v5" stroke="#333"/></svg><div class="mono" style="left:540px;top:740px"><span class="kw">Функция </span><span class="id">ПараметрыРаботыКлиентаПриЗапуске</span><span class="kw">() Экспорт</span></div><div class="fold" style="left:950px;top:739px;width:18px"><span class="dots">...</span></div><svg class="a" style="left:525px;top:775px" width="9" height="9" viewBox="0 0 9 9" ><rect x="0.500" y="0.500" width="8" height="8" fill="#fff" stroke="#333"/><path d="M2 4.500h5" stroke="#333"/><path d="M4.500 2v5" stroke="#333"/></svg><div class="mono" style="left:540px;top:772px"><span class="cm">// Возвращает значения параметров, необходимых для работы клиентского кода конфигурации</span></div><div class="fold" style="left:1246px;top:771px;width:34px"><span style="font-size:13.33px;margin-left:1px">//</span><span style="font-size:3px"> </span><span class="dots">...</span></div><svg class="a" style="left:525px;top:791px" width="9" height="9" viewBox="0 0 9 9" ><rect x="0.500" y="0.500" width="8" height="8" fill="#fff" stroke="#333"/><path d="M2 4.500h5" stroke="#333"/><path d="M4.500 2v5" stroke="#333"/></svg><div class="mono" style="left:540px;top:788px"><span class="kw">Функция </span><span class="id">ПараметрыРаботыКлиента</span><span class="kw">() Экспорт</span></div><div class="fold" style="left:870px;top:787px;width:18px"><span class="dots">...</span></div><div class="a" style="left:529px;top:832px;width:1px;height:28px;background:#fff"></div><div class="a" style="left:529px;top:827px;width:6px;height:1px;background:#333"></div><div class="mono" style="left:540px;top:820px"><span class="pp">#КонецОбласти</span></div><svg class="a" style="left:525px;top:855px" width="9" height="9" viewBox="0 0 9 9" ><rect x="0.500" y="0.500" width="8" height="8" fill="#fff" stroke="#333"/><path d="M2 4.500h5" stroke="#333"/></svg><div class="mono" style="left:540px;top:852px"><span class="pp">#Область СлужебныйПрограммныйИнтерфейс</span></div><svg class="a" style="left:525px;top:887px" width="9" height="9" viewBox="0 0 9 9" ><rect x="0.500" y="0.500" width="8" height="8" fill="#fff" stroke="#333"/><path d="M2 4.500h5" stroke="#333"/><path d="M4.500 2v5" stroke="#333"/></svg><div class="mono" style="left:540px;top:884px"><span class="kw">Функция </span><span class="id">ЗапускПрограммыЗавершен</span><span class="kw">() Экспорт</span></div><div class="fold" style="left:878px;top:883px;width:18px"><span class="dots">...</span></div><div class="a" style="left:508px;top:125px;width:855px;height:596px;background:#cdcdcd;border:1px solid #a0a0a0;border-left-color:#f6f6f6;border-top-color:#f6f6f6"></div><svg class="a" style="left:514px;top:131px" width="14" height="13" viewBox="0 0 14 13" ><rect x="0.500" y="0.500" width="13" height="12" fill="#f4f7fb" stroke="#5f86b0"/><rect x="0.500" y="0.500" width="13" height="2.500" fill="#3f6f9f"/><path d="M2 5.500q1-1.500 2 0t2 0 2 0 2 0 2 0" fill="none" stroke="#333" stroke-width="0.800"/><path d="M2.500 8h9M2.500 10.500h9" stroke="#333" stroke-width="1"/></svg><div class="t" style="left:534px;top:131px;font-weight:bold;color:#111;letter-spacing:0.03px">Справочник Номенклатура: ФормаЭлемента [Только для чтения]</div><svg class="a" style="left:1303px;top:131px" width="54" height="14" viewBox="0 0 54 14" ><path d="M2 11.500h8" stroke="#222" stroke-width="2"/><rect x="20.500" y="2" width="10" height="10" fill="none" stroke="#222" stroke-width="1.200"/><path d="M20 2.500h11" stroke="#222" stroke-width="2"/><path d="M41.500 2l10 10M51.500 2l-10 10" stroke="#222" stroke-width="1.800"/></svg><div class="a" style="left:511px;top:147px;width:849px;height:571px;background:#b9ae7c;border:1px solid #757575"></div><div class="a" style="left:513px;top:149px;width:845px;height:568px;background:#fbf9ea"></div><div class="a" style="left:1360px;top:147px;width:2px;height:573px;background:#d0d0d0"></div><div class="a" style="left:509px;top:718px;width:853px;height:2px;background:#d0d0d0"></div><div class="a" style="left:513px;top:149px;width:393px;height:243px;background:#fbf9ea;border:1px solid #b9ae7c;border-bottom:none"></div><div class="a" style="left:514px;top:150px;width:391px;height:24px;background:linear-gradient(#fdfcf2,#f8f5e2)"></div><div class="a" style="left:514px;top:174px;width:391px;height:1px;background:#c3b98b"></div><svg class="a" style="left:518px;top:155px" width="16" height="16" viewBox="0 0 16 16" ><circle cx="8" cy="8" r="7.300" fill="url(#ggrn)" stroke="#b4bfb1" stroke-width="0.900"/><path d="M8 4v8M4 8h8" stroke="#e3e9e0" stroke-width="2"/></svg><svg class="a" style="left:542px;top:155px" width="14" height="14" viewBox="0 0 14 14" ><path d="M2.500 9l6.500-7.500 4 3-6.500 7.500z" fill="#3dbb2d"/><path d="M4 9.500l6.500-7.500" stroke="#8fe07f" stroke-width="1.400"/><path d="M9 1.500l4 3" stroke="#1a7a12" stroke-width="1"/><path d="M2.500 9l4 3-5 1.500z" fill="#1d5e14"/><path d="M2.500 9l4 3" stroke="#eaf6e4" stroke-width="0.800"/></svg><svg class="a" style="left:565px;top:157px" width="12" height="11" viewBox="0 0 12 11" ><path d="M1.500 1l9 9M10.500 1l-9 9" stroke="#d0bdb9" stroke-width="2.400"/></svg><div class="a" style="left:585px;top:152px;width:1px;height:21px;background:linear-gradient(#f5f2dd,#c5b987 30%,#c5b987 70%,#f5f2dd)"></div><svg class="a" style="left:593px;top:156px" width="13" height="12" viewBox="0 0 13 12" ><path d="M6.500 0.500l6 6h-3v5h-6v-5h-3z" fill="#b5c5d8" stroke="#a5b7cb" stroke-width="0.700"/></svg><svg class="a" style="left:616px;top:156px" width="13" height="12" viewBox="0 0 13 12" ><path d="M6.500 11.500l6-6h-3v-5h-6v5h-3z" fill="#b5c5d8" stroke="#a5b7cb" stroke-width="0.700"/></svg><div class="a" style="left:636px;top:152px;width:1px;height:21px;background:linear-gradient(#f5f2dd,#c5b987 30%,#c5b987 70%,#f5f2dd)"></div><svg class="a" style="left:643px;top:155px" width="17" height="15" viewBox="0 0 17 15" ><rect x="0.500" y="0.500" width="12" height="12" fill="#f4f7fb" stroke="#5f86b0"/><rect x="0.500" y="0.500" width="12" height="2.500" fill="#3f6f9f"/><path d="M2 5.500h3M2 8h3M2 10.500h3M6 5.500h5M6 8h5M6 10.500h5" stroke="#7a93ad"/><path d="M11.500 6.500l5 4-5 4z" fill="#8a4a2a"/></svg><div class="a" style="left:664px;top:152px;width:1px;height:21px;background:linear-gradient(#f5f2dd,#c5b987 30%,#c5b987 70%,#f5f2dd)"></div><svg class="a" style="left:671px;top:154px" width="16" height="15" viewBox="0 0 16 15" ><rect x="0.500" y="0.500" width="15" height="11" fill="#fff" stroke="#3f6f9f" stroke-width="1.200"/><rect x="1" y="1" width="14" height="3.500" fill="#f9c613"/><path d="M4 14.500h8M8 12v2" stroke="#3f6f9f" stroke-width="1.400"/></svg><svg class="a" style="left:689px;top:160px" width="5" height="3" viewBox="0 0 5 3" ><path d="M0 0h5L2.5 3z" fill="#6b4e00"/></svg><svg class="a" style="left:702px;top:155px" width="15" height="14" viewBox="0 0 15 14" ><rect x="0.500" y="0.500" width="14" height="13" fill="#fff" stroke="#3f6f9f" stroke-width="1.200"/><rect x="2.500" y="2.500" width="10" height="3.500" fill="#8f8f8f"/><rect x="2.500" y="7.500" width="10" height="4" fill="#a8a8a8"/></svg><svg class="a" style="left:720px;top:160px" width="5" height="3" viewBox="0 0 5 3" ><path d="M0 0h5L2.5 3z" fill="#6b4e00"/></svg><div class="a" style="left:729px;top:152px;width:1px;height:21px;background:linear-gradient(#f5f2dd,#c5b987 30%,#c5b987 70%,#f5f2dd)"></div><svg class="a" style="left:737px;top:155px" width="14" height="15" viewBox="0 0 14 15" ><path d="M3.500 2.500q6 0 7 9" fill="none" stroke="#222" stroke-width="1.300"/><path d="M1 4.500l2-3.500 2.500 3zM8 10l2.500 4 2.500-4z" fill="#222"/></svg><svg class="a" style="left:759px;top:154px" width="16" height="15" viewBox="0 0 16 15" ><rect x="0.500" y="0.500" width="15" height="11" fill="#fff" stroke="#3f6f9f" stroke-width="1.200"/><path d="M4 14.500h8M8 12v2" stroke="#3f6f9f" stroke-width="1.400"/><path d="M4 8.500l8-5.500M4 8.500v-3M4 8.500h3M12 3h-3M12 3v3" stroke="#333" stroke-width="0.900" fill="none"/></svg><svg class="a" style="left:777px;top:160px" width="5" height="3" viewBox="0 0 5 3" ><path d="M0 0h5L2.5 3z" fill="#6b4e00"/></svg><svg class="a" style="left:792px;top:156px" width="12" height="12" viewBox="0 0 12 12" ><path d="M1.500 10.500l9-9" stroke="#222" stroke-width="1.500"/><path d="M6 1h5v5zM1 6v5h5z" fill="#222"/></svg><svg class="a" style="left:806px;top:160px" width="5" height="3" viewBox="0 0 5 3" ><path d="M0 0h5L2.5 3z" fill="#6b4e00"/></svg><div class="a" style="left:817px;top:152px;width:1px;height:21px;background:linear-gradient(#f5f2dd,#c5b987 30%,#c5b987 70%,#f5f2dd)"></div><svg class="a" style="left:825px;top:155px" width="15" height="14" viewBox="0 0 15 14" ><path d="M1.500 8l3.500 4.500 8.500-11" fill="none" stroke="#b5a7a3" stroke-width="3.200"/></svg><div class="a" style="left:514px;top:175px;width:375px;height:216px;background:#fff"></div><div class="a" style="left:513px;top:175px;width:376px;height:216px;overflow:hidden"><svg class="a" style="left:176px;top:3px" width="15" height="11" viewBox="0 0 15 11" ><rect x="0.500" y="0.500" width="14" height="10" rx="2" fill="#fdebdc" stroke="#b98a62"/><text x="2.800" y="8" font-family="Liberation Sans" font-weight="bold" font-size="7" fill="#7a3f14" letter-spacing="-0.2">OK</text></svg><div class="t" style="left:198px;top:3px;">ДобавитьИзображение</div><svg class="a" style="left:176px;top:22px" width="15" height="11" viewBox="0 0 15 11" ><rect x="0.500" y="0.500" width="14" height="10" rx="2" fill="#fdebdc" stroke="#b98a62"/><text x="2.800" y="8" font-family="Liberation Sans" font-weight="bold" font-size="7" fill="#7a3f14" letter-spacing="-0.2">OK</text></svg><div class="t" style="left:198px;top:22px;">ИзменитьИзображение</div><svg class="a" style="left:176px;top:41px" width="15" height="11" viewBox="0 0 15 11" ><rect x="0.500" y="0.500" width="14" height="10" rx="2" fill="#fdebdc" stroke="#b98a62"/><text x="2.800" y="8" font-family="Liberation Sans" font-weight="bold" font-size="7" fill="#7a3f14" letter-spacing="-0.2">OK</text></svg><div class="t" style="left:198px;top:41px;">ОчиститьИзображение</div><svg class="a" style="left:176px;top:60px" width="15" height="11" viewBox="0 0 15 11" ><rect x="0.500" y="0.500" width="14" height="10" rx="2" fill="#fdebdc" stroke="#b98a62"/><text x="2.800" y="8" font-family="Liberation Sans" font-weight="bold" font-size="7" fill="#7a3f14" letter-spacing="-0.2">OK</text></svg><div class="t" style="left:198px;top:60px;">ПросмотретьИзображение</div><svg class="a" style="left:176px;top:79px" width="15" height="11" viewBox="0 0 15 11" ><rect x="0.500" y="0.500" width="14" height="10" rx="2" fill="#fdebdc" stroke="#b98a62"/><text x="2.800" y="8" font-family="Liberation Sans" font-weight="bold" font-size="7" fill="#7a3f14" letter-spacing="-0.2">OK</text></svg><div class="t" style="left:198px;top:79px;">ВыбратьКартинкуИзПрисоедине...</div><svg class="a" style="left:141px;top:100px" width="9" height="9" viewBox="0 0 9 9" ><circle cx="4.500" cy="4.500" r="4" fill="#fff" stroke="#a0a0a0" stroke-width="0.900"/><path d="M2.500 4.500h4" stroke="#8a8a8a"/></svg><svg class="a" style="left:160px;top:102px" width="10" height="4" viewBox="0 0 10 4" ><rect x="0" y="0" width="10" height="4" rx="1.300" fill="#d8260e"/><path d="M1.500 1.500h7" stroke="#f5a080" stroke-width="1"/></svg><div class="a" style="left:177px;top:95px;width:82px;height:19px;background:#7098d0;border:1px solid #6391cd"></div><div class="t" style="left:180px;top:98px;color:#fff;letter-spacing:-0.3px">ФайлКартинки</div><svg class="a" style="left:160px;top:119px" width="9" height="9" viewBox="0 0 9 9" ><circle cx="4.500" cy="4.500" r="4" fill="#fff" stroke="#a0a0a0" stroke-width="0.900"/><path d="M2.500 4.500h4" stroke="#8a8a8a"/></svg><svg class="a" style="left:176px;top:115px" width="17" height="17" viewBox="0 0 17 17" ><rect x="3.500" y="2.500" width="12" height="13" fill="#f2f7fc" stroke="#86a3c2"/><rect x="5" y="8" width="2" height="2" fill="#e02a1a"/><rect x="5" y="12" width="2" height="2" fill="#1f5fa8"/><path d="M8 5.500h2M11 5.500h1M13 4.500h1.500v1.500h-1.500z" stroke="#9aa7b5" fill="#9aa7b5" stroke-width="0.800"/><path d="M8 9.500h3M12 9.500h2M8 13.500h2M11 13.500h3" stroke="#a9b3bf" stroke-width="1.200"/><rect x="0" y="0" width="9" height="3.500" rx="1.300" fill="#d8260e"/><path d="M1.500 1.500h6" stroke="#f5a080" stroke-width="1"/></svg><div class="t" style="left:198px;top:117px;">Контекстное меню</div><svg class="a" style="left:195px;top:136px" width="15" height="11" viewBox="0 0 15 11" ><rect x="0.500" y="0.500" width="14" height="10" rx="2" fill="#fdebdc" stroke="#b98a62"/><text x="2.800" y="8" font-family="Liberation Sans" font-weight="bold" font-size="7" fill="#7a3f14" letter-spacing="-0.2">OK</text></svg><div class="t" style="left:217px;top:136px;">АдресКартинкиКонтекстное...</div><svg class="a" style="left:195px;top:155px" width="15" height="11" viewBox="0 0 15 11" ><rect x="0.500" y="0.500" width="14" height="10" rx="2" fill="#fdebdc" stroke="#b98a62"/><text x="2.800" y="8" font-family="Liberation Sans" font-weight="bold" font-size="7" fill="#7a3f14" letter-spacing="-0.2">OK</text></svg><div class="t" style="left:217px;top:155px;">АдресКартинкиКонтекстное...</div><svg class="a" style="left:195px;top:174px" width="15" height="11" viewBox="0 0 15 11" ><rect x="0.500" y="0.500" width="14" height="10" rx="2" fill="#fdebdc" stroke="#b98a62"/><text x="2.800" y="8" font-family="Liberation Sans" font-weight="bold" font-size="7" fill="#7a3f14" letter-spacing="-0.2">OK</text></svg><div class="t" style="left:217px;top:174px;">АдресКартинкиКонтекстное...</div><svg class="a" style="left:195px;top:193px" width="15" height="11" viewBox="0 0 15 11" ><rect x="0.500" y="0.500" width="14" height="10" rx="2" fill="#fdebdc" stroke="#b98a62"/><text x="2.800" y="8" font-family="Liberation Sans" font-weight="bold" font-size="7" fill="#7a3f14" letter-spacing="-0.2">OK</text></svg><div class="t" style="left:217px;top:193px;">АдресКартинкиКонтекстное...</div><svg class="a" style="left:195px;top:212px" width="15" height="11" viewBox="0 0 15 11" ><rect x="0.500" y="0.500" width="14" height="10" rx="2" fill="#fdebdc" stroke="#b98a62"/><text x="2.800" y="8" font-family="Liberation Sans" font-weight="bold" font-size="7" fill="#7a3f14" letter-spacing="-0.2">OK</text></svg><div class="t" style="left:217px;top:212px;">АдресКартинкиКонтекстное...</div></div><div class="a" style="left:889px;top:175px;width:16px;height:216px;background:#faf8ee;border-left:1px solid #d6cfac"></div><div class="a" style="left:889px;top:175px;width:16px;height:21px;background:linear-gradient(#fdfcf2,#efe9cc);border:1px solid #d6cfac;border-top:none;border-right:none"></div><div class="a" style="left:889px;top:370px;width:16px;height:21px;background:linear-gradient(#fdfcf2,#efe9cc);border:1px solid #d6cfac;border-bottom:none;border-right:none"></div><svg class="a" style="left:894px;top:182px" width="7" height="7" viewBox="0 0 7 7" ><path d="M3.500 0L7 7H0z" fill="#8f8f8f"/></svg><svg class="a" style="left:894px;top:377px" width="7" height="7" viewBox="0 0 7 7" ><path d="M3.500 7L7 0H0z" fill="#8f8f8f"/></svg><div class="a" style="left:889px;top:246px;width:16px;height:15px;background:linear-gradient(90deg,#fdfcf2,#eee7c8);border:1px solid #d6cfac;border-right:none"></div><div class="a" style="left:896px;top:251px;width:4px;height:4px;border-radius:2px;background:#ddd6b8"></div><div class="a" style="left:513px;top:391px;width:393px;height:1px;background:#c3b98b"></div><div class="a" style="left:513px;top:391px;width:91px;height:21px;background:linear-gradient(#fbf9ea 75%,#f8dfa8);border:1px solid #c3b98b;border-top:none;border-radius:0 0 7px 7px"></div><svg class="a" style="left:526px;top:394px" width="11" height="14" viewBox="0 0 11 14"><rect x="0" y="0" width="10" height="4" rx="1.300" fill="#e8392a"/><rect x="0" y="5" width="10" height="4" rx="1.300" fill="#e8392a"/><rect x="0" y="10" width="10" height="4" rx="1.300" fill="#e8392a"/><path d="M1.500 1.500h7M1.500 6.500h7M1.500 11.500h7" stroke="#f9a090" stroke-width="1.400"/></svg><div class="t" style="left:541px;top:395px;color:#2a2000">Элементы</div><div class="a" style="left:610px;top:392px;width:156px;height:20px;background:#ede8cb;border:1px solid #cfc69d;border-radius:0 0 7px 7px;border-top-color:#c3b98b"></div><svg class="a" style="left:623px;top:394px" width="11" height="14" viewBox="0 0 11 14"><rect x="0" y="0" width="10" height="4" rx="1.300" fill="#4aa52e"/><rect x="0" y="5" width="10" height="4" rx="1.300" fill="#4aa52e"/><rect x="0" y="10" width="10" height="4" rx="1.300" fill="#4aa52e"/><path d="M1.500 1.500h7M1.500 6.500h7M1.500 11.500h7" stroke="#a5dc8c" stroke-width="1.400"/></svg><div class="t" style="left:638px;top:395px;color:#2a2000">Командный интерфейс</div><div class="a" style="left:911px;top:149px;width:448px;height:243px;background:#fbf9ea;border:1px solid #b9ae7c;border-bottom:none"></div><div class="a" style="left:912px;top:150px;width:446px;height:24px;background:linear-gradient(#fdfcf2,#f8f5e2)"></div><svg class="a" style="left:918px;top:154px" width="17" height="17" viewBox="0 0 17 17" ><rect x="0.500" y="3.500" width="9" height="3" rx="1.500" fill="#bccadb" stroke="#a9b9cc"/><circle cx="9.5" cy="11" r="5" fill="#c6d3c4"/><path d="M9.5 8v6M6.5 11h6" stroke="#e2e6e3" stroke-width="1.800"/></svg><svg class="a" style="left:939px;top:154px" width="17" height="17" viewBox="0 0 17 17" ><rect x="0.500" y="1.500" width="14" height="12" fill="#d5dde8" stroke="#b5c3d5"/><rect x="4.500" y="1.500" width="5" height="12" fill="#dcc3c8" stroke="#c9a9b0"/><path d="M2.500 4v8" stroke="#b5c3d5" stroke-dasharray="1 1"/><circle cx="11.5" cy="11" r="5" fill="#c6d3c4"/><path d="M11.5 8v6M8.5 11h6" stroke="#e2e6e3" stroke-width="1.800"/></svg><svg class="a" style="left:962px;top:154px" width="17" height="17" viewBox="0 0 17 17" ><path d="M0 1h6v2h2v3h-2v-2h-2v2h-4v-3h2z" fill="#b3ad9f"/><circle cx="11.5" cy="11" r="5" fill="#c6d3c4"/><path d="M11.5 8v6M8.5 11h6" stroke="#e2e6e3" stroke-width="1.800"/></svg><div class="a" style="left:983px;top:152px;width:1px;height:21px;background:linear-gradient(#f5f2dd,#c5b987 30%,#c5b987 70%,#f5f2dd)"></div><svg class="a" style="left:991px;top:155px" width="14" height="14" viewBox="0 0 14 14" ><path d="M2.500 9l6.500-7.500 4 3-6.500 7.500z" fill="#3dbb2d"/><path d="M4 9.500l6.500-7.500" stroke="#8fe07f" stroke-width="1.400"/><path d="M9 1.500l4 3" stroke="#1a7a12" stroke-width="1"/><path d="M2.500 9l4 3-5 1.500z" fill="#1d5e14"/><path d="M2.500 9l4 3" stroke="#eaf6e4" stroke-width="0.800"/></svg><svg class="a" style="left:1015px;top:157px" width="12" height="11" viewBox="0 0 12 11" ><path d="M1.500 1l9 9M10.500 1l-9 9" stroke="#d0bdb9" stroke-width="2.400"/></svg><div class="a" style="left:912px;top:174px;width:446px;height:1px;background:#c3b98b"></div><div class="a" style="left:912px;top:175px;width:429px;height:35px;background:linear-gradient(#fcfaea,#f1eaca);border-bottom:1px solid #d6cfac"></div><div class="a" style="left:1077px;top:176px;width:1px;height:33px;background:#d6cfac"></div><div class="a" style="left:1101px;top:176px;width:1px;height:33px;background:#d6cfac"></div><div class="a" style="left:1173px;top:176px;width:1px;height:33px;background:#d6cfac"></div><div class="t" style="left:916px;top:178px;color:#453600">Реквизит</div><svg class="a" style="left:1084px;top:186px" width="15" height="13" viewBox="0 0 15 13" ><rect x="0.500" y="0.500" width="14" height="12" fill="#eaf2fa" stroke="#7a9cc0"/><rect x="0.500" y="0.500" width="14" height="3" fill="#3f6f9f"/><path d="M2 5.500h11" stroke="#4f7fae" stroke-dasharray="2 1"/><path d="M2 8h4M8 8h5M2 10.500h4M8 10.500h5" stroke="#b5c7d9"/></svg><div class="t" style="left:1106px;top:178px;color:#453600">Использова</div><div class="t" style="left:1106px;top:191px;color:#453600">ть</div><div class="t" style="left:1178px;top:178px;color:#453600">Тип</div><div class="a" style="left:912px;top:210px;width:429px;height:181px;background:#fff"></div><div class="a" style="left:912px;top:210px;width:429px;height:181px;overflow:hidden"><svg class="a" style="left:7px;top:6px" width="9" height="9" viewBox="0 0 9 9" ><circle cx="4.500" cy="4.500" r="4" fill="#fff" stroke="#a0a0a0" stroke-width="0.900"/><path d="M2.500 4.500h4" stroke="#8a8a8a"/><path d="M4.500 2.500v4" stroke="#8a8a8a"/></svg><svg class="a" style="left:26px;top:8px" width="11" height="5" viewBox="0 0 11 5" ><rect x="0" y="0.500" width="11" height="4" rx="2" fill="#5f8fc6"/><path d="M1.500 1.800h8" stroke="#cfe0f3" stroke-width="1.200"/></svg><div class="a" style="left:43px;top:1px;width:49px;height:19px;background:#7098d0;border:1px solid #6391cd"></div><div class="t" style="left:45px;top:4px;color:#fff;font-weight:bold;letter-spacing:-0.2px">Объект</div><div class="t" style="left:266px;top:4px;font-weight:bold;letter-spacing:-0.2px">(СправочникОбъект.Ном...</div><svg class="a" style="left:26px;top:27px" width="11" height="5" viewBox="0 0 11 5" ><rect x="0" y="0.500" width="11" height="4" rx="2" fill="#5f8fc6"/><path d="M1.500 1.800h8" stroke="#cfe0f3" stroke-width="1.200"/></svg><div class="t" style="left:45px;top:23px;">АдресВременногоХр...</div><div class="t" style="left:266px;top:23px;">Строка</div><svg class="a" style="left:26px;top:46px" width="11" height="5" viewBox="0 0 11 5" ><rect x="0" y="0.500" width="11" height="4" rx="2" fill="#5f8fc6"/><path d="M1.500 1.800h8" stroke="#cfe0f3" stroke-width="1.200"/></svg><div class="t" style="left:45px;top:42px;">АдресКартинки</div><div class="t" style="left:266px;top:42px;">Строка</div><div class="a" style="left:174px;top:46px;width:7px;height:7px;background:#cdcdcd;border:1px solid #9a9a9a;border-radius:1px"></div><svg class="a" style="left:26px;top:65px" width="11" height="5" viewBox="0 0 11 5" ><rect x="0" y="0.500" width="11" height="4" rx="2" fill="#5f8fc6"/><path d="M1.500 1.800h8" stroke="#cfe0f3" stroke-width="1.200"/></svg><div class="t" style="left:45px;top:61px;">АдресОписанияHTML</div><div class="t" style="left:266px;top:61px;">Строка</div><svg class="a" style="left:7px;top:82px" width="9" height="9" viewBox="0 0 9 9" ><circle cx="4.500" cy="4.500" r="4" fill="#fff" stroke="#a0a0a0" stroke-width="0.900"/><path d="M2.500 4.500h4" stroke="#8a8a8a"/><path d="M4.500 2.500v4" stroke="#8a8a8a"/></svg><svg class="a" style="left:26px;top:84px" width="11" height="5" viewBox="0 0 11 5" ><rect x="0" y="0.500" width="11" height="4" rx="2" fill="#5f8fc6"/><path d="M1.500 1.800h8" stroke="#cfe0f3" stroke-width="1.200"/></svg><div class="t" style="left:45px;top:80px;">ВариантКомплектаци...</div><div class="t" style="left:266px;top:80px;">СправочникСсылка.Варианты...</div><svg class="a" style="left:26px;top:103px" width="11" height="5" viewBox="0 0 11 5" ><rect x="0" y="0.500" width="11" height="4" rx="2" fill="#5f8fc6"/><path d="M1.500 1.800h8" stroke="#cfe0f3" stroke-width="1.200"/></svg><div class="t" style="left:45px;top:99px;">ВесМожноУказывать...</div><div class="t" style="left:266px;top:99px;">Строка</div><div class="a" style="left:174px;top:103px;width:7px;height:7px;background:#cdcdcd;border:1px solid #9a9a9a;border-radius:1px"></div><svg class="a" style="left:7px;top:120px" width="9" height="9" viewBox="0 0 9 9" ><circle cx="4.500" cy="4.500" r="4" fill="#fff" stroke="#a0a0a0" stroke-width="0.900"/><path d="M2.500 4.500h4" stroke="#8a8a8a"/><path d="M4.500 2.500v4" stroke="#8a8a8a"/></svg><svg class="a" style="left:26px;top:122px" width="11" height="5" viewBox="0 0 11 5" ><rect x="0" y="0.500" width="11" height="4" rx="2" fill="#5f8fc6"/><path d="M1.500 1.800h8" stroke="#cfe0f3" stroke-width="1.200"/></svg><div class="t" style="left:45px;top:118px;">ВидНоменклатурыДо...</div><div class="t" style="left:266px;top:118px;">СправочникСсылка.ВидыНом...</div><svg class="a" style="left:26px;top:141px" width="11" height="5" viewBox="0 0 11 5" ><rect x="0" y="0.500" width="11" height="4" rx="2" fill="#5f8fc6"/><path d="M1.500 1.800h8" stroke="#cfe0f3" stroke-width="1.200"/></svg><div class="t" style="left:45px;top:137px;">ДанныеФайлаHTML</div><div class="t" style="left:266px;top:137px;">Произвольный</div><svg class="a" style="left:26px;top:160px" width="11" height="5" viewBox="0 0 11 5" ><rect x="0" y="0.500" width="11" height="4" rx="2" fill="#5f8fc6"/><path d="M1.500 1.800h8" stroke="#cfe0f3" stroke-width="1.200"/></svg><div class="t" style="left:45px;top:156px;">ДанныеФайлаКарти...</div><div class="t" style="left:266px;top:156px;">Произвольный</div><svg class="a" style="left:26px;top:179px" width="11" height="5" viewBox="0 0 11 5" ><rect x="0" y="0.500" width="11" height="4" rx="2" fill="#5f8fc6"/><path d="M1.500 1.800h8" stroke="#cfe0f3" stroke-width="1.200"/></svg><div class="t" style="left:45px;top:175px;">ДанныеМожноУказыв...</div><div class="t" style="left:266px;top:175px;">Строка</div><div class="a" style="left:174px;top:179px;width:7px;height:7px;background:#cdcdcd;border:1px solid #9a9a9a;border-radius:1px"></div></div><div class="a" style="left:1341px;top:175px;width:17px;height:216px;background:#faf8ee;border-left:1px solid #d6cfac"></div><div class="a" style="left:1341px;top:175px;width:17px;height:21px;background:linear-gradient(#fdfcf2,#efe9cc);border:1px solid #d6cfac;border-top:none;border-right:none"></div><div class="a" style="left:1341px;top:370px;width:17px;height:21px;background:linear-gradient(#fdfcf2,#efe9cc);border:1px solid #d6cfac;border-bottom:none;border-right:none"></div><svg class="a" style="left:1347px;top:182px" width="7" height="7" viewBox="0 0 7 7" ><path d="M3.500 0L7 7H0z" fill="#c9c9c0"/></svg><svg class="a" style="left:1347px;top:377px" width="7" height="7" viewBox="0 0 7 7" ><path d="M3.500 7L7 0H0z" fill="#8f8f8f"/></svg><div class="a" style="left:1341px;top:195px;width:17px;height:33px;background:linear-gradient(90deg,#fdfcf2,#eee7c8);border:1px solid #d6cfac;border-right:none"></div><div class="a" style="left:1348px;top:209px;width:4px;height:4px;border-radius:2px;background:#ddd6b8"></div><div class="a" style="left:1358px;top:149px;width:1px;height:243px;background:#b9ae7c"></div><div class="a" style="left:911px;top:391px;width:448px;height:1px;background:#c3b98b"></div><div class="a" style="left:911px;top:391px;width:94px;height:21px;background:linear-gradient(#fbf9ea 75%,#f8dfa8);border:1px solid #c3b98b;border-top:none;border-radius:0 0 7px 7px"></div><svg class="a" style="left:924px;top:394px" width="11" height="14" viewBox="0 0 11 14"><rect x="0" y="0" width="10" height="4" rx="1.300" fill="#7fa6d3"/><rect x="0" y="5" width="10" height="4" rx="1.300" fill="#7fa6d3"/><rect x="0" y="10" width="10" height="4" rx="1.300" fill="#7fa6d3"/><path d="M1.500 1.500h7M1.500 6.500h7M1.500 11.500h7" stroke="#d5e4f5" stroke-width="1.400"/></svg><div class="t" style="left:939px;top:395px;color:#2a2000">Реквизиты</div><div class="a" style="left:1012px;top:392px;width:86px;height:20px;background:#ede8cb;border:1px solid #cfc69d;border-radius:0 0 7px 7px;border-top-color:#c3b98b"></div><svg class="a" style="left:1025px;top:394px" width="11" height="14" viewBox="0 0 11 14"><rect x="0" y="0" width="10" height="4" rx="1.300" fill="#e6b83a"/><rect x="0" y="5" width="10" height="4" rx="1.300" fill="#e6b83a"/><rect x="0" y="10" width="10" height="4" rx="1.300" fill="#e6b83a"/><path d="M1.500 1.500h7M1.500 6.500h7M1.500 11.500h7" stroke="#f9e29a" stroke-width="1.400"/></svg><div class="t" style="left:1040px;top:395px;color:#2a2000">Команды</div><div class="a" style="left:1104px;top:392px;width:98px;height:20px;background:#ede8cb;border:1px solid #cfc69d;border-radius:0 0 7px 7px;border-top-color:#c3b98b"></div><svg class="a" style="left:1117px;top:394px" width="11" height="14" viewBox="0 0 11 14"><rect x="0" y="0" width="10" height="4" rx="1.300" fill="#c9805a"/><rect x="0" y="5" width="10" height="4" rx="1.300" fill="#c9805a"/><rect x="0" y="10" width="10" height="4" rx="1.300" fill="#c9805a"/><path d="M1.500 1.500h7M1.500 6.500h7M1.500 11.500h7" stroke="#ecc0a5" stroke-width="1.400"/></svg><div class="t" style="left:1132px;top:395px;color:#2a2000">Параметры</div><div class="a" style="left:513px;top:418px;width:829px;height:263px;background:#fff;border-top:1px solid #c3b98b"></div><div class="a" style="left:517px;top:419px;width:1px;height:262px;background:#000"></div><div class="a" style="left:530px;top:419px;width:1px;height:262px;background:#c6c6c6"></div><div class="a" style="left:513px;top:419px;width:829px;height:262px;overflow:hidden"><div class="frm" style="left:28px;top:3px;letter-spacing:-0.05px">Наименование для печати:</div><div class="a" style="left:195px;top:-9px;width:411px;height:32px;background:#fff;border:1px solid #a9a9a9;border-radius:3px;"></div><div class="a" style="left:616px;top:1px;width:30px;height:25px;background:linear-gradient(#fff,#f0f0f0);border:1px solid #c2c2c2;border-bottom-color:#a8a8a8;border-radius:3px;box-shadow:0 1px 1px rgba(0,0,0,0.12)"><svg class="a" style="left:6px;top:4px" width="17" height="16" viewBox="0 0 17 16"><rect x="0.500" y="0.500" width="9" height="9" fill="#e8eef5" stroke="#5a7a9a"/><rect x="6.500" y="6.500" width="9" height="9" fill="#e8eef5" stroke="#5a7a9a"/><path d="M8.500 9.500h5M8.500 11.500h5M8.500 13.500h5" stroke="#9ab"/><path d="M4 3v4q0 2 3 2l-0.500-2.500 5 4-5 3.500 0.500-2.500q-5.500 0-5.500-4.500v-2z" fill="#2bb673" stroke="#1a8a4a" stroke-width="0.500"/></svg></div><div class="frm" style="left:28px;top:41px;letter-spacing:-0.15px">Артикул:</div><div class="a" style="left:85px;top:36px;width:411px;height:25px;background:#fff;border:1px solid #a9a9a9;border-radius:3px;"></div><div class="frm" style="left:506px;top:41px;letter-spacing:-0.15px">Код:</div><div class="a" style="left:538px;top:36px;width:300px;height:25px;background:#fff;border:1px solid #a9a9a9;border-radius:3px;border-color:#c4c4c4"></div><svg class="a" style="left:30px;top:75px" width="13" height="9" viewBox="0 0 13 9" ><path d="M1 1.500l5.500 6 5.500-6" fill="none" stroke="#009646" stroke-width="1.600"/></svg><div class="frm" style="left:49px;top:70px;font-size:15px;color:#009646;letter-spacing:0;line-height:18px">Описание</div><svg class="a" style="left:490px;top:75px" width="13" height="9" viewBox="0 0 13 9" ><path d="M1 1.500l5.500 6 5.500-6" fill="none" stroke="#009646" stroke-width="1.600"/></svg><div class="frm" style="left:509px;top:70px;font-size:15px;color:#009646;letter-spacing:0.38px;line-height:18px">Основные параметры учета</div><div class="a" style="left:38px;top:92px;width:30px;height:26px;background:linear-gradient(#fff,#f0f0f0);border:1px solid #c2c2c2;border-bottom-color:#a8a8a8;border-radius:3px;box-shadow:0 1px 1px rgba(0,0,0,0.12)"><svg class="a" style="left:6px;top:4px" width="16" height="16" viewBox="0 0 16 16"><circle cx="8" cy="8" r="7" fill="#2fb24a" stroke="#1f8f37"/><path d="M8 4v8M4 8h8" stroke="#fff" stroke-width="2"/></svg></div><div class="a" style="left:77px;top:92px;width:30px;height:26px;background:linear-gradient(#fff,#f0f0f0);border:1px solid #c2c2c2;border-bottom-color:#a8a8a8;border-radius:3px;box-shadow:0 1px 1px rgba(0,0,0,0.12)"><svg class="a" style="left:6px;top:4px" width="16" height="16" viewBox="0 0 16 16"><path d="M3 10.500l7.500-8 3 2.700-7.500 8z" fill="#5cb85c" stroke="#4a9a4a" stroke-width="0.600"/><path d="M10.500 2.500l1.300-1.300 3 2.700-1.300 1.300z" fill="#34495e"/><path d="M3 10.500l3 2.700-4.500 1.600z" fill="#e6a23c"/></svg></div><div class="a" style="left:116px;top:92px;width:30px;height:26px;background:linear-gradient(#fff,#f0f0f0);border:1px solid #c2c2c2;border-bottom-color:#a8a8a8;border-radius:3px;box-shadow:0 1px 1px rgba(0,0,0,0.12)"><svg class="a" style="left:6px;top:4px" width="16" height="16" viewBox="0 0 16 16"><circle cx="8" cy="8" r="7" fill="#e0202a" stroke="#b81820"/><path d="M5.200 5.200l5.600 5.600M10.800 5.200l-5.600 5.600" stroke="#fff" stroke-width="2"/></svg></div><div class="a" style="left:155px;top:92px;width:30px;height:26px;background:linear-gradient(#fff,#f0f0f0);border:1px solid #c2c2c2;border-bottom-color:#a8a8a8;border-radius:3px;box-shadow:0 1px 1px rgba(0,0,0,0.12)"><svg class="a" style="left:9px;top:7px" width="11" height="10" viewBox="0 0 11 10"><rect x="4.500" y="0.500" width="5" height="4" fill="#fff" stroke="#444"/><path d="M3 3.500h-2.500v5h6v-2.500" fill="none" stroke="#444"/></svg></div><div class="a" style="left:194px;top:92px;width:196px;height:26px;background:linear-gradient(#fff,#f0f0f0);border:1px solid #c2c2c2;border-bottom-color:#a8a8a8;border-radius:3px;box-shadow:0 1px 1px rgba(0,0,0,0.12)"><div class="frm" style="left:0;top:4px;width:194px;text-align:center;letter-spacing:-0.18px;color:#333">Из присоединенных файлов</div></div><div class="a" style="left:35px;top:125px;width:446px;height:136px;border:2px solid #1e8cf0;background:#fff"></div><div class="a" style="left:38px;top:128px;width:440px;height:130px;border:1px solid #a9a9a9;background:#fff"></div><div class="frm" style="left:38px;top:183px;width:440px;text-align:center;font-size:17px;color:#d2d2d2;letter-spacing:-0.27px;line-height:20px">Добавить изображение</div><div class="frm" style="left:498px;top:97px;letter-spacing:-0.15px">Вид номенклатуры:</div><div class="a" style="left:640px;top:92px;width:200px;height:25px;background:#ffe6b5;border:1px solid #b9b29a;border-radius:3px"></div><div class="a" style="left:644px;top:113px;width:190px;height:0px;border-top:1px dotted #f00"></div><div class="frm" style="left:498px;top:131px;letter-spacing:-0.15px">Ставка НДС:</div><div class="a" style="left:640px;top:126px;width:122px;height:25px;background:#fff;border:1px solid #a9a9a9;border-radius:3px;"></div><div class="a" style="left:740px;top:127px;width:1px;height:23px;background:#b9b9b9"></div><div class="a" style="left:644px;top:147px;width:94px;height:0px;border-top:1px dotted #f00"></div><svg class="a" style="left:748px;top:137px" width="7" height="4" viewBox="0 0 7 4" ><path d="M0 0h7L3.5 4z" fill="#333"/></svg><div class="frm" style="left:498px;top:162px;letter-spacing:-0.15px">Тип номенклатуры:</div><div class="frm" style="left:498px;top:190px;letter-spacing:-0.15px">Характеристики:</div><div class="frm" style="left:498px;top:218px;letter-spacing:-0.15px">Серии:</div><div class="frm" style="left:498px;top:247px;letter-spacing:-0.15px">ТН ВЭД:</div><div class="a" style="left:640px;top:243px;width:174px;height:25px;background:#fff;border:1px solid #a9a9a9;border-radius:3px;"></div><div class="a" style="left:770px;top:244px;width:1px;height:23px;background:#b9b9b9"></div><div class="a" style="left:791px;top:244px;width:1px;height:23px;background:#b9b9b9"></div><svg class="a" style="left:777px;top:253px" width="7" height="4" viewBox="0 0 7 4" ><path d="M0 0h7L3.5 4z" fill="#333"/></svg><svg class="a" style="left:797px;top:248px" width="11" height="10" viewBox="0 0 11 10" ><rect x="4.500" y="0.500" width="5" height="4" fill="#fff" stroke="#444"/><path d="M3 3.500h-2.500v5h6v-2.500" fill="none" stroke="#444"/></svg></div><div class="a" style="left:1342px;top:419px;width:16px;height:262px;background:#faf8ee;border-left:1px solid #d6cfac"></div><div class="a" style="left:1342px;top:419px;width:16px;height:21px;background:linear-gradient(#fdfcf2,#efe9cc);border:1px solid #d6cfac;border-top:none;border-right:none"></div><div class="a" style="left:1342px;top:660px;width:16px;height:21px;background:linear-gradient(#fdfcf2,#efe9cc);border:1px solid #d6cfac;border-bottom:none;border-right:none"></div><svg class="a" style="left:1347px;top:426px" width="7" height="7" viewBox="0 0 7 7" ><path d="M3.500 0L7 7H0z" fill="#8f8f8f"/></svg><svg class="a" style="left:1347px;top:667px" width="7" height="7" viewBox="0 0 7 7" ><path d="M3.500 7L7 0H0z" fill="#8f8f8f"/></svg><div class="a" style="left:1342px;top:518px;width:16px;height:128px;background:linear-gradient(90deg,#fdfcf2,#e3dab0);border:1px solid #d6cfac;border-right:none"></div><div class="a" style="left:1349px;top:580px;width:4px;height:4px;border-radius:2px;background:#ddd6b8"></div><div class="a" style="left:1358px;top:418px;width:1px;height:279px;background:#b9ae7c"></div><div class="a" style="left:513px;top:681px;width:829px;height:15px;background:#faf8ee;border-top:1px solid #d6cfac"></div><div class="a" style="left:513px;top:681px;width:21px;height:15px;background:linear-gradient(#fdfcf2,#efe9cc);border:1px solid #d6cfac;border-left:none;border-bottom:none"></div><svg class="a" style="left:520px;top:684px" width="7" height="9" viewBox="0 0 7 9" ><path d="M0 4.500L7 0v9z" fill="#c9c9c9"/></svg><div class="a" style="left:534px;top:681px;width:644px;height:15px;background:linear-gradient(#fdfcf2,#e6deb6);border:1px solid #d6cfac;border-bottom:none"></div><div class="a" style="left:853px;top:687px;width:4px;height:4px;border-radius:2px;background:#d6cfb0"></div><div class="a" style="left:1321px;top:681px;width:21px;height:15px;background:linear-gradient(#fdfcf2,#efe9cc);border:1px solid #d6cfac;border-bottom:none"></div><svg class="a" style="left:1328px;top:684px" width="7" height="9" viewBox="0 0 7 9" ><path d="M7 4.500L0 0v9z" fill="#8f8f8f"/></svg><div class="a" style="left:1342px;top:681px;width:16px;height:15px;background:#faf8ee;border-top:1px solid #d6cfac;border-left:1px solid #d6cfac"></div><div class="a" style="left:513px;top:696px;width:846px;height:1px;background:#c3b98b"></div><div class="a" style="left:516px;top:696px;width:76px;height:21px;background:linear-gradient(#fbf9ea 75%,#f8dfa8);border:1px solid #c3b98b;border-top:none;border-radius:0 0 7px 7px"></div><svg class="a" style="left:527px;top:700px" width="15" height="13" viewBox="0 0 15 13"><rect x="0.500" y="0.500" width="14" height="12" fill="#eaf2fa" stroke="#7a9cc0"/><rect x="0.500" y="0.500" width="14" height="3" fill="#3f6f9f"/><path d="M2 5.500h11" stroke="#4f7fae" stroke-dasharray="2 1"/><path d="M2 8h4M8 8h5M2 10.500h4M8 10.500h5" stroke="#b5c7d9"/></svg><div class="t" style="left:545px;top:700px;color:#2a2000">Форма</div><div class="a" style="left:598px;top:697px;width:77px;height:20px;background:#ede8cb;border:1px solid #cfc69d;border-radius:0 0 7px 7px;border-top-color:#c3b98b"></div><svg class="a" style="left:609px;top:699px" width="14" height="15" viewBox="0 0 14 15"><rect x="0.500" y="0.500" width="13" height="14" fill="#f4f7fb" stroke="#7a9cc0"/><path d="M2.500 3.500h9M2.500 5.500h9M2.500 7.500h9M2.500 9.500h9M2.500 11.500h9" stroke="#9ab"/></svg><div class="t" style="left:626px;top:700px;color:#2a2000">Модуль</div></body></html>
